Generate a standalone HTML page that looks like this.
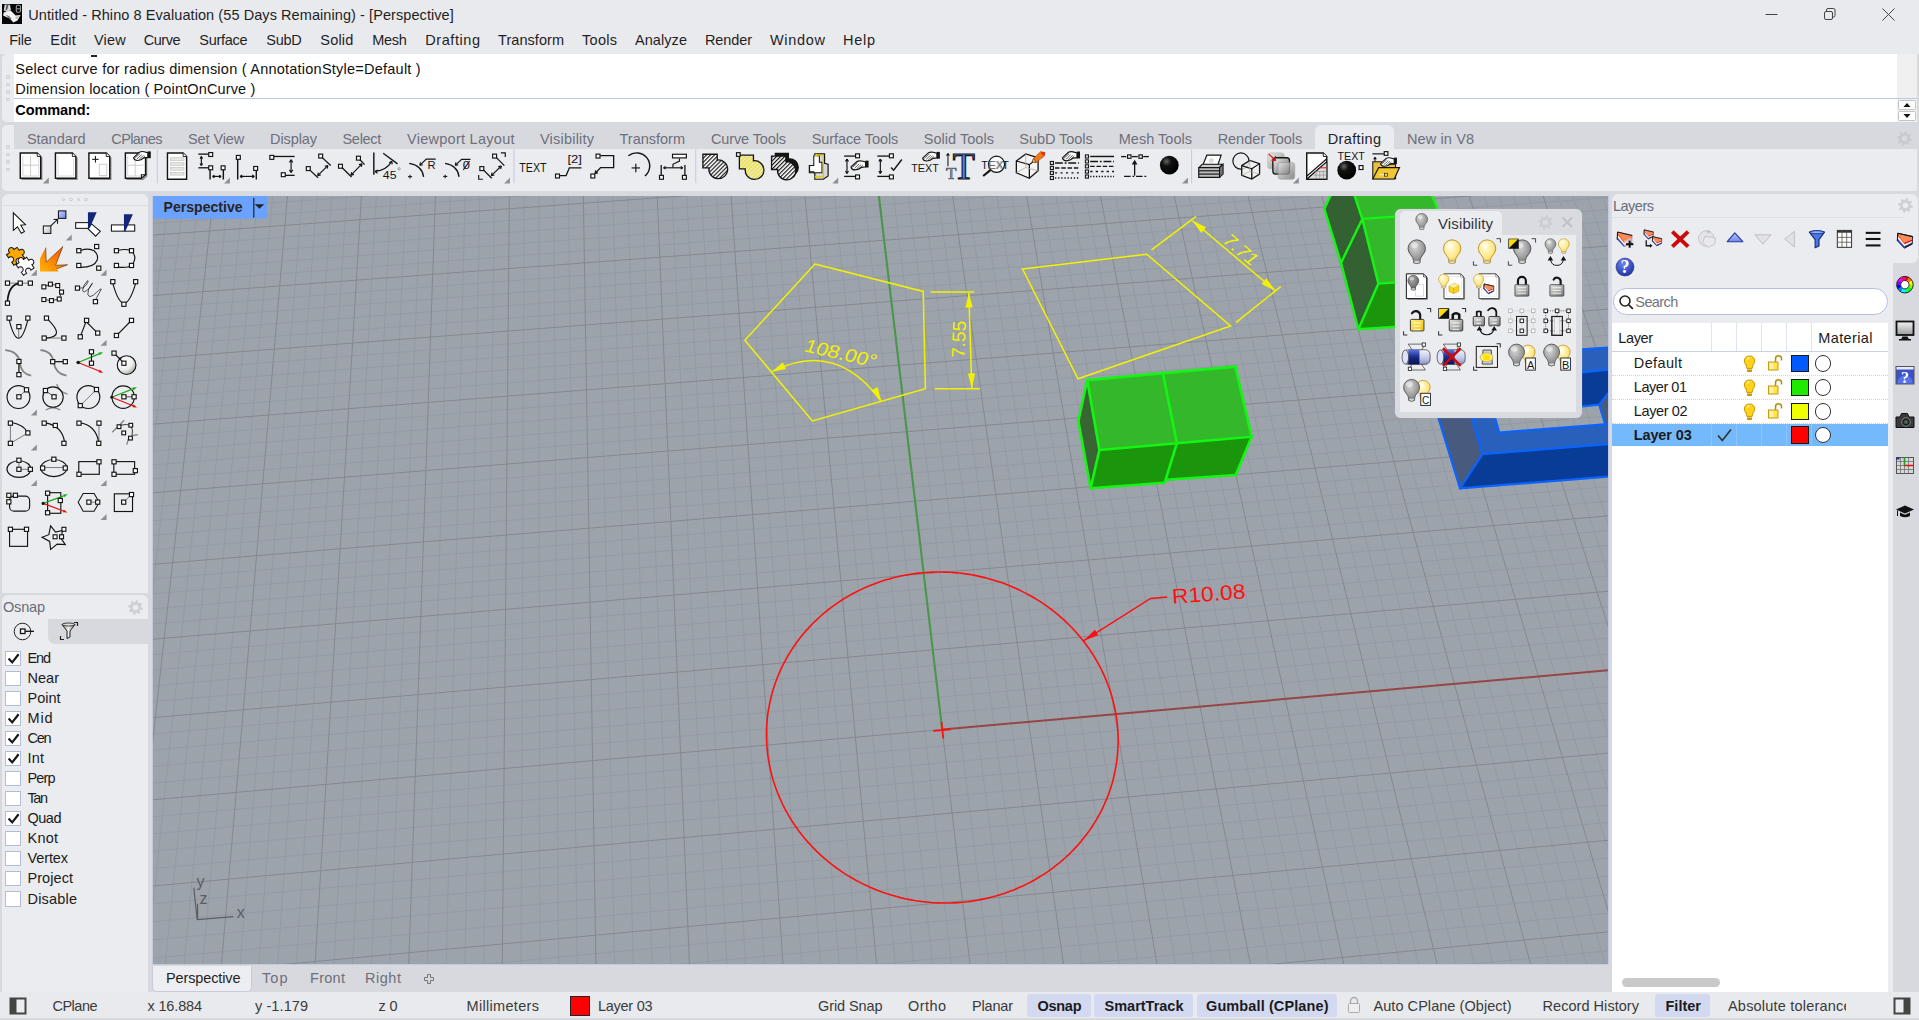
<!DOCTYPE html><html><head><meta charset="utf-8"><title>Untitled - Rhino 8 Evaluation</title><style>
*{box-sizing:border-box;margin:0;padding:0}
html,body{width:1919px;height:1020px;overflow:hidden;background:#d8d9de;font-family:"Liberation Sans",sans-serif;}
.t{position:absolute;white-space:nowrap;line-height:20px;font-size:14.5px;color:#1b1b1b}
.a{position:absolute}
svg{position:absolute;overflow:visible}
</style></head><body>
<div class="a" style="left:0px;top:0px;width:1919px;height:54px;background:#e9eaee;"></div>
<svg style="left:2px;top:4px" width="20" height="20" viewBox="0 0 20 20"><rect width="20" height="20" fill="#060606"/><path d="M2.700 0.400L8 0.700L8.900 6L4.900 7.900L1.750 6.600Z" fill="#d8d8d8"/><path d="M4.500 1L6.500 1L5 6L3.500 6.500Z" fill="#555"/><path d="M1.750 8.500L8.600 6.600L13.600 11.600L18.600 11L15.500 16.600L11.400 18.500L8 14.750L1.100 11.600Z" fill="#f2f2f2"/><path d="M3.500 10.500L7.500 12.500L9.500 15L8 15.500Z" fill="#666"/><path d="M13 13L17.500 11.800L15 15.500Z" fill="#bbb"/><rect x="14.300" y="1.300" width="4.200" height="7" rx="1.500" fill="none" stroke="#9a9a9a" stroke-width="1.100"/><path d="M14.500 4.800h4" stroke="#9a9a9a" stroke-width="1"/></svg>
<span class="t" style="left:28.30px;top:4.98px;font-size:14.50px;letter-spacing:0.075px;color:#1f1f1f;">Untitled - Rhino 8 Evaluation (55 Days Remaining) - [Perspective]</span>
<span class="t" style="left:9.30px;top:29.98px;font-size:14.50px;letter-spacing:-0.288px;color:#1f1f1f;">File</span>
<span class="t" style="left:50.30px;top:29.98px;font-size:14.50px;letter-spacing:0.171px;color:#1f1f1f;">Edit</span>
<span class="t" style="left:94.00px;top:29.98px;font-size:14.50px;letter-spacing:0.211px;color:#1f1f1f;">View</span>
<span class="t" style="left:143.80px;top:29.98px;font-size:14.50px;letter-spacing:-0.495px;color:#1f1f1f;">Curve</span>
<span class="t" style="left:199.30px;top:29.98px;font-size:14.50px;letter-spacing:-0.295px;color:#1f1f1f;">Surface</span>
<span class="t" style="left:266.30px;top:29.98px;font-size:14.50px;letter-spacing:-0.258px;color:#1f1f1f;">SubD</span>
<span class="t" style="left:320.30px;top:29.98px;font-size:14.50px;letter-spacing:0.189px;color:#1f1f1f;">Solid</span>
<span class="t" style="left:372.30px;top:29.98px;font-size:14.50px;letter-spacing:-0.319px;color:#1f1f1f;">Mesh</span>
<span class="t" style="left:425.30px;top:29.98px;font-size:14.50px;letter-spacing:0.561px;color:#1f1f1f;">Drafting</span>
<span class="t" style="left:498.00px;top:29.98px;font-size:14.50px;letter-spacing:0.059px;color:#1f1f1f;">Transform</span>
<span class="t" style="left:582.00px;top:29.98px;font-size:14.50px;letter-spacing:0.287px;color:#1f1f1f;">Tools</span>
<span class="t" style="left:635.00px;top:29.98px;font-size:14.50px;letter-spacing:0.069px;color:#1f1f1f;">Analyze</span>
<span class="t" style="left:705.00px;top:29.98px;font-size:14.50px;letter-spacing:-0.112px;color:#1f1f1f;">Render</span>
<span class="t" style="left:770.00px;top:29.98px;font-size:14.50px;letter-spacing:0.686px;color:#1f1f1f;">Window</span>
<span class="t" style="left:843.00px;top:29.98px;font-size:14.50px;letter-spacing:0.726px;color:#1f1f1f;">Help</span>
<svg style="left:1750px;top:0" width="169" height="30"><path d="M15.5 14.5h12" stroke="#444" fill="none"/><rect x="74.5" y="11.5" width="8" height="8" rx="1.5" fill="none" stroke="#444"/><path d="M76.5 11.5v-1.5a1.5 1.5 0 0 1 1.5-1.5h5.5a1.5 1.5 0 0 1 1.5 1.5v5.5a1.5 1.5 0 0 1-1.5 1.5h-1" fill="none" stroke="#444"/><path d="M132.5 8.5l12 12m0-12l-12 12" stroke="#444" fill="none"/></svg>
<div class="a" style="left:2px;top:54px;width:1915px;height:68px;background:#ebecf0;border-radius:5px 0 0 5px;"></div>
<div class="a" style="left:14px;top:54px;width:1883px;height:68px;background:#fff;"></div>
<div class="a" style="left:1897px;top:54px;width:20px;height:68px;background:#f0f0f0;"></div>
<div class="a" style="left:14px;top:98px;width:1903px;height:1px;background:#bfc8e0;"></div>
<div class="a" style="left:91px;top:55px;width:6px;height:1.5px;background:#222;"></div>
<span class="t" style="left:15.30px;top:58.68px;font-size:14.50px;letter-spacing:0.235px;color:#111;">Select curve for radius dimension ( AnnotationStyle=Default )</span>
<span class="t" style="left:15.30px;top:78.68px;font-size:14.50px;letter-spacing:0.137px;color:#111;">Dimension location ( PointOnCurve )</span>
<span class="t" style="left:15.30px;top:99.58px;font-size:14.50px;letter-spacing:-0.103px;font-weight:bold;color:#000;">Command:</span>
<div class="a" style="left:6px;top:75.3px;width:3.5px;height:3.5px;border:1px solid #c3c4ca;border-radius:50%"></div>
<div class="a" style="left:6px;top:82.8px;width:3.5px;height:3.5px;border:1px solid #c3c4ca;border-radius:50%"></div>
<div class="a" style="left:6px;top:90.3px;width:3.5px;height:3.5px;border:1px solid #c3c4ca;border-radius:50%"></div>
<div class="a" style="left:6px;top:97.8px;width:3.5px;height:3.5px;border:1px solid #c3c4ca;border-radius:50%"></div>
<svg style="left:1898px;top:99px" width="19" height="23"><rect x="0.5" y="1.5" width="17" height="9" rx="1" fill="#fdfdfd" stroke="#c4c4c4"/><rect x="0.5" y="12.5" width="17" height="9" rx="1" fill="#fdfdfd" stroke="#c4c4c4"/><path d="M5.500 8l3.500-4 3.500 4z M5.500 15l3.500 4 3.500-4z" fill="#111"/></svg>
<div class="a" style="left:2px;top:125px;width:1915px;height:66px;background:#ebecf0;border-radius:5px 0 0 5px;"></div>
<div class="a" style="left:14px;top:125px;width:1903px;height:24px;background:#d8d9de;"></div>
<div class="a" style="left:1314.5px;top:125px;width:79px;height:24px;background:#ebecf0;border-radius:6px 6px 0 0;"></div>
<span class="t" style="left:27.00px;top:128.98px;font-size:14.50px;letter-spacing:-0.050px;color:#6d6f7a;">Standard</span>
<span class="t" style="left:111.30px;top:128.98px;font-size:14.50px;letter-spacing:-0.601px;color:#6d6f7a;">CPlanes</span>
<span class="t" style="left:188.00px;top:128.98px;font-size:14.50px;letter-spacing:-0.094px;color:#6d6f7a;">Set View</span>
<span class="t" style="left:270.00px;top:128.98px;font-size:14.50px;letter-spacing:-0.091px;color:#6d6f7a;">Display</span>
<span class="t" style="left:342.50px;top:128.98px;font-size:14.50px;letter-spacing:-0.300px;color:#6d6f7a;">Select</span>
<span class="t" style="left:407.00px;top:128.98px;font-size:14.50px;letter-spacing:0.270px;color:#6d6f7a;">Viewport Layout</span>
<span class="t" style="left:540.00px;top:128.98px;font-size:14.50px;letter-spacing:0.210px;color:#6d6f7a;">Visibility</span>
<span class="t" style="left:619.50px;top:128.98px;font-size:14.50px;letter-spacing:-0.004px;color:#6d6f7a;">Transform</span>
<span class="t" style="left:711.00px;top:128.98px;font-size:14.50px;letter-spacing:-0.130px;color:#6d6f7a;">Curve Tools</span>
<span class="t" style="left:811.70px;top:128.98px;font-size:14.50px;letter-spacing:-0.083px;color:#6d6f7a;">Surface Tools</span>
<span class="t" style="left:923.70px;top:128.98px;font-size:14.50px;letter-spacing:0.044px;color:#6d6f7a;">Solid Tools</span>
<span class="t" style="left:1019.30px;top:128.98px;font-size:14.50px;letter-spacing:-0.054px;color:#6d6f7a;">SubD Tools</span>
<span class="t" style="left:1118.70px;top:128.98px;font-size:14.50px;letter-spacing:0.025px;color:#6d6f7a;">Mesh Tools</span>
<span class="t" style="left:1217.70px;top:128.98px;font-size:14.50px;letter-spacing:-0.052px;color:#6d6f7a;">Render Tools</span>
<span class="t" style="left:1407.00px;top:128.98px;font-size:14.50px;letter-spacing:0.114px;color:#6d6f7a;">New in V8</span>
<span class="t" style="left:1327.70px;top:128.98px;font-size:14.50px;letter-spacing:0.361px;color:#1f1f1f;">Drafting</span>
<div class="a" style="left:6px;top:145px;width:3.5px;height:3.5px;border:1px solid #c3c4ca;border-radius:50%"></div>
<div class="a" style="left:6px;top:152.5px;width:3.5px;height:3.5px;border:1px solid #c3c4ca;border-radius:50%"></div>
<div class="a" style="left:6px;top:160.1px;width:3.5px;height:3.5px;border:1px solid #c3c4ca;border-radius:50%"></div>
<div class="a" style="left:6px;top:167.6px;width:3.5px;height:3.5px;border:1px solid #c3c4ca;border-radius:50%"></div>
<svg style="left:14px;top:148px" width="250" height="44" viewBox="0 0 1919 337.700"><path d="M213 71 V240 H58" fill="none" stroke="#8a8a8a" stroke-width="10"/><path d="M48 38 H178 L205 65 V232 H48 Z" fill="#fff" stroke="#141414" stroke-width="11" stroke-linejoin="miter"/><path d="M178 38 V65 H205" fill="#fff" stroke="#141414" stroke-width="7"/><path d="M127 62 L127 215" fill="none" stroke="#cfcfcf" stroke-width="8" /><path d="M68 132 L190 132" fill="none" stroke="#cfcfcf" stroke-width="8" /><path d="M68 62V215H190V75" fill="none" stroke="#cfcfcf" stroke-width="6" /><path d="M267 227 v45 h-45 z" fill="#8f9095"/><path d="M483 71 V240 H328" fill="none" stroke="#8a8a8a" stroke-width="10"/><path d="M318 38 H448 L475 65 V232 H318 Z" fill="#fff" stroke="#141414" stroke-width="11" stroke-linejoin="miter"/><path d="M448 38 V65 H475" fill="#fff" stroke="#141414" stroke-width="7"/><path d="M338 58V215H457V75" fill="none" stroke="#d4d4d4" stroke-width="6" /><path d="M743 71 V240 H585" fill="none" stroke="#8a8a8a" stroke-width="10"/><path d="M575 38 H708 L735 65 V232 H575 Z" fill="#fff" stroke="#141414" stroke-width="11" stroke-linejoin="miter"/><path d="M708 38 V65 H735" fill="#fff" stroke="#141414" stroke-width="7"/><path d="M600 87 L650 87" fill="none" stroke="#141414" stroke-width="8" /><path d="M625 62 L625 112" fill="none" stroke="#141414" stroke-width="8" /><path d="M655 125H712V212H655Z" fill="#fff" stroke="#cfcfcf" stroke-width="8" /><path d="M1018 60V216L990 240H863" fill="none" stroke="#8a8a8a" stroke-width="10"/><path d="M855 38H1010V205L978 232H855Z" fill="#fff" stroke="#141414" stroke-width="11"/><path d="M930 62 L930 215" fill="none" stroke="#cfcfcf" stroke-width="8" /><path d="M872 132 L995 132" fill="none" stroke="#cfcfcf" stroke-width="8" /><path d="M873 62V215H975" fill="none" stroke="#cfcfcf" stroke-width="6" /><path d="M978 232V205H1010Z" fill="#fff" stroke="#141414" stroke-width="8"/><g transform="translate(918,24) scale(1)"><path d="M0 50 L45 8 Q60 0 80 5 L110 12 V48 L80 52 Q60 70 30 72 Q5 72 0 50Z" fill="#fff" stroke="#141414" stroke-width="9"/><rect x="108" y="2" width="24" height="52" fill="#141414"/><path d="M12 52L50 18M26 60L62 26M42 64L76 32M58 64L88 36" stroke="#141414" stroke-width="5"/></g><path d="M1100 10 L1100 270" fill="none" stroke="#c3cbe3" stroke-width="8" /><path d="M1178 38 H1298 L1325 65 V240 H1178 Z" fill="#fff" stroke="#141414" stroke-width="11" stroke-linejoin="miter"/><path d="M1298 38 V65 H1325" fill="#fff" stroke="#141414" stroke-width="7"/><rect x="1200" y="75" width="105" height="20" fill="#e6e6e6" stroke="#bdbdbd" stroke-width="5"/><rect x="1200" y="113" width="105" height="20" fill="#e6e6e6" stroke="#bdbdbd" stroke-width="5"/><rect x="1200" y="150" width="105" height="20" fill="#e6e6e6" stroke="#bdbdbd" stroke-width="5"/><rect x="1200" y="188" width="105" height="20" fill="#e6e6e6" stroke="#bdbdbd" stroke-width="5"/><path d="M1415 47 L1497 47" fill="none" stroke="#141414" stroke-width="10" /><rect x="1495" y="35" width="30" height="30" fill="#fff" stroke="#141414" stroke-width="9"/><path d="M1415 152 L1497 152" fill="none" stroke="#141414" stroke-width="10" /><rect x="1495" y="137" width="30" height="30" fill="#fff" stroke="#141414" stroke-width="9"/><path d="M1438 66 L1438 134" fill="none" stroke="#141414" stroke-width="9" /><path d="M1428.46 118.735 L1438 134 M1447.54 118.735 L1438 134" fill="none" stroke="#141414" stroke-width="9"/><path d="M1447.54 81.2649 L1438 66 M1428.46 81.2649 L1438 66" fill="none" stroke="#141414" stroke-width="9"/><path d="M1505 167 L1505 242" fill="none" stroke="#141414" stroke-width="11" /><rect x="1590" y="137" width="30" height="30" fill="#fff" stroke="#141414" stroke-width="9"/><path d="M1607 167 L1607 242" fill="none" stroke="#141414" stroke-width="11" /><path d="M1524 218 L1590 218" fill="none" stroke="#141414" stroke-width="9" /><path d="M1574.74 227.539 L1590 218 M1574.74 208.461 L1590 218" fill="none" stroke="#141414" stroke-width="9"/><path d="M1539.26 208.461 L1524 218 M1539.26 227.539 L1524 218" fill="none" stroke="#141414" stroke-width="9"/><path d="M1657 227 v45 h-45 z" fill="#8f9095"/><rect x="1707" y="57" width="30" height="30" fill="#fff" stroke="#141414" stroke-width="9"/><path d="M1717 87 L1717 242" fill="none" stroke="#141414" stroke-width="11" /><rect x="1840" y="142" width="30" height="30" fill="#fff" stroke="#141414" stroke-width="9"/><path d="M1860 172 L1860 242" fill="none" stroke="#141414" stroke-width="11" /><path d="M1735 218 L1845 218" fill="none" stroke="#141414" stroke-width="9" /><path d="M1828.04 228.598 L1845 218 M1828.04 207.402 L1845 218" fill="none" stroke="#141414" stroke-width="9"/><path d="M1751.96 207.402 L1735 218 M1751.96 228.598 L1735 218" fill="none" stroke="#141414" stroke-width="9"/></svg>
<svg style="left:264px;top:148px" width="250" height="44" viewBox="0 0 1919 337.700"><rect x="45" y="57" width="30" height="30" fill="#fff" stroke="#141414" stroke-width="9"/><path d="M75 65 L235 65" fill="none" stroke="#141414" stroke-width="10" /><rect x="133" y="190" width="30" height="30" fill="#fff" stroke="#141414" stroke-width="9"/><path d="M163 210 L235 210" fill="none" stroke="#141414" stroke-width="10" /><path d="M208 90 L208 188" fill="none" stroke="#141414" stroke-width="9" /><path d="M195.282 167.647 L208 188 M220.718 167.647 L208 188" fill="none" stroke="#141414" stroke-width="9"/><path d="M220.718 110.353 L208 90 M195.282 110.353 L208 90" fill="none" stroke="#141414" stroke-width="9"/><rect x="420" y="47" width="30" height="30" fill="#fff" stroke="#141414" stroke-width="9"/><path d="M445 72 L512 135" fill="none" stroke="#141414" stroke-width="10" /><rect x="325" y="143" width="30" height="30" fill="#fff" stroke="#141414" stroke-width="9"/><path d="M350 168 L415 228" fill="none" stroke="#141414" stroke-width="10" /><path d="M412 212 L490 135" fill="none" stroke="#141414" stroke-width="9" /><path d="M484.45 158.35 L490 135 M466.581 140.248 L490 135" fill="none" stroke="#141414" stroke-width="9"/><path d="M417.55 188.65 L412 212 M435.419 206.752 L412 212" fill="none" stroke="#141414" stroke-width="9"/><rect x="710" y="63" width="30" height="30" fill="#fff" stroke="#141414" stroke-width="9"/><path d="M737 90 L772 128" fill="none" stroke="#141414" stroke-width="10" /><rect x="572" y="125" width="30" height="30" fill="#fff" stroke="#141414" stroke-width="9"/><path d="M598 150 L672 222" fill="none" stroke="#141414" stroke-width="10" /><path d="M668 208 L752 122" fill="none" stroke="#141414" stroke-width="9" /><path d="M746.877 145.447 L752 122 M728.68 127.674 L752 122" fill="none" stroke="#141414" stroke-width="9"/><path d="M673.123 184.553 L668 208 M691.32 202.326 L668 208" fill="none" stroke="#141414" stroke-width="9"/><path d="M843 35 L843 205" fill="none" stroke="#141414" stroke-width="11" /><path d="M915 40 L1025 122" fill="none" stroke="#141414" stroke-width="10" /><path d="M855 180 Q940 170 980 105" fill="none" stroke="#141414" stroke-width="9" /><path d="M873.384 169.104 L852 180 M871.167 194.444 L852 180" fill="none" stroke="#141414" stroke-width="9"/><path d="M983.674 125.942 L982 102 M961.215 114 L982 102" fill="none" stroke="#141414" stroke-width="9"/><text x="912" y="240" font-family="Liberation Sans,sans-serif" font-size="78" fill="#141414" textLength="105" lengthAdjust="spacingAndGlyphs" >45</text><circle cx="1037" cy="160" r="9" fill="none" stroke="#888" stroke-width="6"/><path d="M1115 118 Q1215 135 1225 222" fill="none" stroke="#141414" stroke-width="10" /><path d="M1200 130 L1245 85 L1318 85" fill="none" stroke="#141414" stroke-width="9" /><path d="M1201.4 110.615 L1196 134 M1219.38 128.601 L1196 134" fill="none" stroke="#141414" stroke-width="9"/><text x="1255" y="165" font-family="Liberation Sans,sans-serif" font-size="80" fill="#141414" textLength="62" lengthAdjust="spacingAndGlyphs" >R</text><path d="M1105 220 L1137 220" fill="none" stroke="#141414" stroke-width="8" /><path d="M1121 206 L1121 234" fill="none" stroke="#141414" stroke-width="8" /><path d="M1390 118 Q1488 135 1497 222" fill="none" stroke="#141414" stroke-width="10" /><path d="M1472 130 L1517 87 L1585 87" fill="none" stroke="#141414" stroke-width="9" /><path d="M1473.4 110.615 L1468 134 M1491.38 128.601 L1468 134" fill="none" stroke="#141414" stroke-width="9"/><text x="1525" y="165" font-family="Liberation Sans,sans-serif" font-size="80" fill="#141414" textLength="55" lengthAdjust="spacingAndGlyphs" >0</text><path d="M1530 168 L1578 100" fill="none" stroke="#141414" stroke-width="8" /><path d="M1375 218 L1407 218" fill="none" stroke="#141414" stroke-width="8" /><path d="M1391 206 L1391 232" fill="none" stroke="#141414" stroke-width="8" /><rect x="1755" y="47" width="30" height="30" fill="#fff" stroke="#141414" stroke-width="9"/><path d="M1782 72 L1845 135" fill="none" stroke="#141414" stroke-width="10" /><rect x="1657" y="143" width="30" height="30" fill="#fff" stroke="#141414" stroke-width="9"/><path d="M1684 168 L1748 232" fill="none" stroke="#141414" stroke-width="10" /><path d="M1745 212 L1822 138" fill="none" stroke="#141414" stroke-width="9" /><path d="M1816.14 161.273 L1822 138 M1798.51 142.933 L1822 138" fill="none" stroke="#141414" stroke-width="9"/><path d="M1750.86 188.727 L1745 212 M1768.49 207.067 L1745 212" fill="none" stroke="#141414" stroke-width="9"/><path d="M1818 38 L1852 38 L1852 70" fill="none" stroke="#141414" stroke-width="9" /><path d="M1648 208 L1648 240 L1680 240" fill="none" stroke="#141414" stroke-width="9" /><path d="M1888 227 v45 h-45 z" fill="#8f9095"/></svg>
<svg style="left:514px;top:148px" width="250" height="44" viewBox="0 0 1919 337.700"><path d="M0 10 L0 270" fill="none" stroke="#c3cbe3" stroke-width="8" /><text x="40" y="185" font-family="Liberation Sans,sans-serif" font-size="92" fill="#141414" textLength="210" lengthAdjust="spacingAndGlyphs" >TEXT</text><rect x="319" y="200" width="30" height="30" fill="#fff" stroke="#141414" stroke-width="9"/><path d="M350 212 L400 212 L425 152 L518 152" fill="none" stroke="#141414" stroke-width="10" /><text x="410" y="118" font-family="Liberation Sans,sans-serif" font-size="88" fill="#141414" textLength="112" lengthAdjust="spacingAndGlyphs" >[2]</text><rect x="630" y="47" width="30" height="30" fill="#fff" stroke="#141414" stroke-width="9"/><path d="M662 58 L765 58 L765 150 L665 150 L620 198" fill="none" stroke="#141414" stroke-width="10" /><rect x="590" y="200" width="30" height="30" fill="#fff" stroke="#141414" stroke-width="9"/><path d="M627.399 172.615 L622 196 M645.385 190.601 L622 196" fill="none" stroke="#141414" stroke-width="9"/><path d="M878 60 A95 95 0 0 1 1005 215" fill="none" stroke="#141414" stroke-width="11" /><path d="M903 153 L967 153" fill="none" stroke="#141414" stroke-width="9" /><path d="M935 120 L935 186" fill="none" stroke="#141414" stroke-width="9" /><rect x="1217" y="48" width="106" height="28" fill="#fff" stroke="#141414" stroke-width="9"/><path d="M1270 80 L1270 100 L1220 125 L1220 150" fill="none" stroke="#141414" stroke-width="9" /><path d="M1130 130 L1130 208" fill="none" stroke="#141414" stroke-width="10" /><path d="M1312 130 L1312 208" fill="none" stroke="#141414" stroke-width="10" /><rect x="1117" y="210" width="30" height="30" fill="#fff" stroke="#141414" stroke-width="9"/><rect x="1293" y="210" width="30" height="30" fill="#fff" stroke="#141414" stroke-width="9"/><path d="M1148 152 L1295 152" fill="none" stroke="#141414" stroke-width="9" /><path d="M1279.74 161.539 L1295 152 M1279.74 142.461 L1295 152" fill="none" stroke="#141414" stroke-width="9"/><path d="M1163.26 142.461 L1148 152 M1163.26 161.539 L1148 152" fill="none" stroke="#141414" stroke-width="9"/><path d="M1395 10 L1395 270" fill="none" stroke="#c3cbe3" stroke-width="8" /><defs><pattern id="hk" width="22" height="22" patternUnits="userSpaceOnUse" patternTransform="rotate(-45)"><rect width="22" height="22" fill="#fff"/><rect width="22" height="9" fill="#141414"/></pattern><pattern id="hy" width="22" height="22" patternUnits="userSpaceOnUse" patternTransform="rotate(-45)"><rect width="22" height="22" fill="#e6e6e6"/><rect width="22" height="9" fill="#f5e600"/></pattern></defs><path d="M1450 48H1560V92A72 72 0 1 1 1497 152H1450Z" fill="url(#hk)" stroke="#141414" stroke-width="10"/><path d="M1730 55H1838V98A72 72 0 1 1 1775 160H1730Z" fill="url(#hy)" stroke="#141414" stroke-width="10"/><rect x="1708" y="36" width="28" height="28" fill="#fff" stroke="#141414" stroke-width="9"/></svg>
<svg style="left:764px;top:148px" width="250" height="44" viewBox="0 0 1919 337.700"><path transform="translate(24,-26)" d="M58 62H168V105A70 70 0 1 1 105 165H58Z" fill="#141414"/><path d="M58 62H168V105A70 70 0 1 1 105 165H58Z" fill="url(#hk)" stroke="#141414" stroke-width="10"/><path d="M390 45H465V118L492 125V215L455 240H390V190H348V135H390Z" fill="#d8d8d8" stroke="#141414" stroke-width="9"/><path d="M382 60H425V110H445V190H382V182H350V135H382Z" fill="#fff" stroke="#141414" stroke-width="8"/><path d="M400 55 L455 55 L455 222 L400 222" fill="none" stroke="#d8c800" stroke-width="9" /><path d="M385 55l22-12v24zM385 222l22-12v24z" fill="#e6d200"/><path d="M570 227 v45 h-45 z" fill="#8f9095"/><path d="M615 62 L700 62" fill="none" stroke="#141414" stroke-width="10" /><rect x="703" y="45" width="30" height="30" fill="#fff" stroke="#141414" stroke-width="9"/><path d="M615 218 L700 218" fill="none" stroke="#141414" stroke-width="10" /><rect x="703" y="207" width="30" height="30" fill="#fff" stroke="#141414" stroke-width="9"/><path d="M637 85 L637 195" fill="none" stroke="#141414" stroke-width="9" /><path d="M625.342 176.343 L637 195 M648.658 176.343 L637 195" fill="none" stroke="#141414" stroke-width="9"/><path d="M648.658 103.657 L637 85 M625.342 103.657 L637 85" fill="none" stroke="#141414" stroke-width="9"/><g transform="translate(668,95) scale(1.02)"><path d="M0 50 L45 8 Q60 0 80 5 L110 12 V48 L80 52 Q60 70 30 72 Q5 72 0 50Z" fill="#fff" stroke="#141414" stroke-width="9"/><rect x="108" y="2" width="24" height="52" fill="#141414"/><path d="M12 52L50 18M26 60L62 26M42 64L76 32M58 64L88 36" stroke="#141414" stroke-width="5"/></g><path d="M870 62 L960 62" fill="none" stroke="#141414" stroke-width="10" /><rect x="963" y="45" width="30" height="30" fill="#fff" stroke="#141414" stroke-width="9"/><path d="M870 218 L960 218" fill="none" stroke="#141414" stroke-width="10" /><rect x="963" y="207" width="30" height="30" fill="#fff" stroke="#141414" stroke-width="9"/><path d="M893 85 L893 195" fill="none" stroke="#141414" stroke-width="9" /><path d="M881.342 176.343 L893 195 M904.658 176.343 L893 195" fill="none" stroke="#141414" stroke-width="9"/><path d="M904.658 103.657 L893 85 M881.342 103.657 L893 85" fill="none" stroke="#141414" stroke-width="9"/><path d="M975 150 L995 170 L1058 88" fill="none" stroke="#141414" stroke-width="11" /><text x="1130" y="185" font-family="Liberation Sans,sans-serif" font-size="88" fill="#141414" textLength="212" lengthAdjust="spacingAndGlyphs" >TEXT</text><g transform="translate(1218,28) scale(1)"><path d="M0 50 L45 8 Q60 0 80 5 L110 12 V48 L80 52 Q60 70 30 72 Q5 72 0 50Z" fill="#fff" stroke="#141414" stroke-width="9"/><rect x="108" y="2" width="24" height="52" fill="#141414"/><path d="M12 52L50 18M26 60L62 26M42 64L76 32M58 64L88 36" stroke="#141414" stroke-width="5"/></g><text x="1448" y="240" font-family="Liberation Serif,serif" font-size="285" fill="#5a7be0" stroke="#141414" stroke-width="9" textLength="170" lengthAdjust="spacingAndGlyphs">T</text><text x="1398" y="240" font-family="Liberation Serif,serif" font-size="125" fill="#9a9a9a" stroke="#555" stroke-width="5" textLength="80" lengthAdjust="spacingAndGlyphs">T</text><path d="M1412 50 L1412 140" fill="none" stroke="#141414" stroke-width="8" /><path d="M1422.6 58.961 L1412 42 M1401.4 58.961 L1412 42" fill="none" stroke="#141414" stroke-width="9"/><text x="1668" y="160" font-family="Liberation Sans,sans-serif" font-size="88" fill="#141414" textLength="212" lengthAdjust="spacingAndGlyphs" >TEXT</text><circle cx="1785" cy="125" r="62" fill="#ffffffb0" stroke="#141414" stroke-width="9"/><path d="M1738 170 L1682 215" fill="none" stroke="#141414" stroke-width="16" /><text x="1722" y="158" font-family="Liberation Sans,sans-serif" font-size="84" fill="#666" textLength="118" lengthAdjust="spacingAndGlyphs" >EX</text></svg>
<svg style="left:1014px;top:148px" width="250" height="44" viewBox="0 0 1919 337.700"><path d="M18 100L90 45L185 75V175L118 232L18 190Z" fill="#f4f4f4" stroke="#141414" stroke-width="10" /><path d="M18 100 L118 128 L185 75" fill="none" stroke="#141414" stroke-width="9" /><path d="M118 128 L118 232" fill="none" stroke="#141414" stroke-width="10" /><path d="M90 45 L90 150 L18 190" fill="none" stroke="#aaa" stroke-width="6" /><path d="M90 150 L185 175" fill="none" stroke="#aaa" stroke-width="6" /><path d="M140 105L150 80L205 28L238 35L232 62L170 112Z" fill="#f07818" stroke="#b04000" stroke-width="5"/><path d="M140 105L150 80L170 112Z" fill="#f5d080" stroke="#222" stroke-width="4"/><path d="M205 28L238 35L232 62L215 50Z" fill="#e03010"/><rect x="279" y="103" width="24" height="24" fill="#ddd" stroke="#141414" stroke-width="8"/><path d="M315 115 H498" stroke="#141414" stroke-width="11" stroke-dasharray="60 14 14 14"/><rect x="279" y="141" width="24" height="24" fill="#ddd" stroke="#141414" stroke-width="8"/><path d="M315 153 H498" stroke="#141414" stroke-width="11" stroke-dasharray="34 14"/><rect x="279" y="179" width="24" height="24" fill="#ddd" stroke="#141414" stroke-width="8"/><path d="M315 191 H498" stroke="#141414" stroke-width="11" stroke-dasharray="16 26"/><rect x="279" y="218" width="24" height="24" fill="#ddd" stroke="#141414" stroke-width="8"/><path d="M315 230 H498" stroke="#141414" stroke-width="11" stroke-dasharray="10 14"/><g transform="translate(372,25) scale(1.02)"><path d="M0 50 L45 8 Q60 0 80 5 L110 12 V48 L80 52 Q60 70 30 72 Q5 72 0 50Z" fill="#fff" stroke="#141414" stroke-width="9"/><rect x="108" y="2" width="24" height="52" fill="#141414"/><path d="M12 52L50 18M26 60L62 26M42 64L76 32M58 64L88 36" stroke="#141414" stroke-width="5"/></g><rect x="548" y="53" width="24" height="24" fill="#ddd" stroke="#141414" stroke-width="8"/><path d="M585 65 H768" stroke="#141414" stroke-width="11" stroke-dasharray="none"/><rect x="548" y="91" width="24" height="24" fill="#ddd" stroke="#141414" stroke-width="8"/><path d="M585 103 H768" stroke="#141414" stroke-width="11" stroke-dasharray="60 14 14 14"/><rect x="548" y="129" width="24" height="24" fill="#ddd" stroke="#141414" stroke-width="8"/><path d="M585 141 H768" stroke="#141414" stroke-width="11" stroke-dasharray="34 14"/><rect x="548" y="169" width="24" height="24" fill="#ddd" stroke="#141414" stroke-width="8"/><path d="M585 181 H768" stroke="#141414" stroke-width="11" stroke-dasharray="18 24"/><rect x="548" y="207" width="24" height="24" fill="#ddd" stroke="#141414" stroke-width="8"/><path d="M585 219 H768" stroke="#141414" stroke-width="11" stroke-dasharray="10 12"/><path d="M822 66 L862 66" fill="none" stroke="#141414" stroke-width="10" /><rect x="872" y="53" width="26" height="26" fill="#fff" stroke="#141414" stroke-width="9"/><path d="M905 66 L950 66" fill="none" stroke="#141414" stroke-width="10" /><rect x="959" y="53" width="26" height="26" fill="#fff" stroke="#141414" stroke-width="9"/><path d="M992 66 L1035 66" fill="none" stroke="#141414" stroke-width="10" /><path d="M926 212 L926 105" fill="none" stroke="#141414" stroke-width="10" /><path d="M926 90l-22 36h44z" fill="#141414"/><path d="M845 218H1015" stroke="#141414" stroke-width="11" stroke-dasharray="50 14 14 14"/><defs><radialGradient id="sph" cx="0.35" cy="0.3" r="0.7"><stop offset="0" stop-color="#666"/><stop offset="0.35" stop-color="#111"/><stop offset="1" stop-color="#000"/></radialGradient></defs><circle cx="1192" cy="132" r="72" fill="url(#sph)"/><path d="M1335 227 v45 h-45 z" fill="#8f9095"/><path d="M1363 10 L1363 270" fill="none" stroke="#c3cbe3" stroke-width="8" /><path d="M1450 130L1480 55H1590L1565 130Z" fill="#fff" stroke="#141414" stroke-width="9"/><path d="M1498 88l15-8 17 6v18l-15 8-17-6z" fill="#ddd" stroke="#bbb" stroke-width="3"/><path d="M1420 150L1445 125H1600L1575 150Z" fill="#ccc" stroke="#141414" stroke-width="8"/><path d="M1418 150H1578V225H1418Z" fill="#bdbdbd" stroke="#141414" stroke-width="9"/><path d="M1420 175 L1578 175" fill="none" stroke="#141414" stroke-width="9" /><path d="M1420 200 L1578 200" fill="none" stroke="#141414" stroke-width="9" /><path d="M1578 150L1605 125V200L1578 225Z" fill="#777" stroke="#141414" stroke-width="8"/><circle cx="1742" cy="100" r="62" fill="none" stroke="#141414" stroke-width="9"/><path d="M1748 135L1810 95L1885 120V200L1825 238L1748 210Z" fill="#f0f0f0d0" stroke="#141414" stroke-width="10" /><path d="M1748 135 L1825 160 L1885 120" fill="none" stroke="#141414" stroke-width="9" /><path d="M1825 160 L1825 238" fill="none" stroke="#141414" stroke-width="10" /><path d="M1810 95 L1810 180 L1748 210" fill="none" stroke="#aaa" stroke-width="5" /><path d="M1810 180 L1885 200" fill="none" stroke="#aaa" stroke-width="5" /></svg>
<svg style="left:1264px;top:148px" width="250" height="44" viewBox="0 0 1919 337.700"><defs><linearGradient id="gq" x1="0" y1="0" x2="1" y2="1"><stop offset="0" stop-color="#eee"/><stop offset="1" stop-color="#666"/></linearGradient></defs><rect x="28" y="38" width="128" height="122" rx="22" fill="url(#gq)" stroke="#aaa" stroke-width="6" opacity="0.7"/><rect x="68" y="75" width="128" height="125" rx="22" fill="url(#gq)" stroke="#141414" stroke-width="10"/><rect x="108" y="112" width="128" height="128" rx="22" fill="url(#gq)" stroke="#999" stroke-width="6" opacity="0.75"/><path d="M35 45 L85 92" fill="none" stroke="#f01010" stroke-width="9" /><path d="M58 95 L88 95 L88 62" fill="none" stroke="#f01010" stroke-width="9" /><path d="M267 227 v45 h-45 z" fill="#8f9095"/><path d="M328 38 H455 L482 65 V240 H328 Z" fill="#fff" stroke="#141414" stroke-width="11" stroke-linejoin="miter"/><path d="M455 38 V65 H482" fill="#fff" stroke="#141414" stroke-width="7"/><path d="M330 238L482 105V238Z" fill="#ddd" stroke="#141414" stroke-width="6"/><path d="M330 215 L482 82" fill="none" stroke="#141414" stroke-width="9" /><path d="M330 238 L482 105" fill="none" stroke="#141414" stroke-width="9" /><path d="M400 175 L400 238" fill="none" stroke="#777" stroke-width="4" /><path d="M428 175 L428 238" fill="none" stroke="#777" stroke-width="4" /><path d="M456 175 L456 238" fill="none" stroke="#777" stroke-width="4" /><path d="M380 180 L482 180" fill="none" stroke="#777" stroke-width="4" /><path d="M380 208 L482 208" fill="none" stroke="#777" stroke-width="4" /><path d="M425 152 L478 152" fill="none" stroke="#f01010" stroke-width="8" /><text x="565" y="92" font-family="Liberation Sans,sans-serif" font-size="82" fill="#141414" textLength="208" lengthAdjust="spacingAndGlyphs" >TEXT</text><circle cx="635" cy="170" r="72" fill="url(#sph)"/><rect x="730" y="135" width="30" height="30" fill="#fff" stroke="#141414" stroke-width="9"/><path d="M832 45 L920 45" fill="none" stroke="#141414" stroke-width="9" /><rect x="923" y="28" width="28" height="28" fill="#fff" stroke="#141414" stroke-width="9"/><path d="M852 80 L852 215" fill="none" stroke="#141414" stroke-width="7" /><path d="M861.539 87.2649 L852 72 M842.461 87.2649 L852 72" fill="none" stroke="#141414" stroke-width="9"/><path d="M835 105H900L915 125H1010V235H835Z" fill="#e8c040" stroke="#141414" stroke-width="8"/><g transform="translate(895,72) scale(0.95)"><path d="M0 50 L45 8 Q60 0 80 5 L110 12 V48 L80 52 Q60 70 30 72 Q5 72 0 50Z" fill="#fff" stroke="#141414" stroke-width="9"/><rect x="108" y="2" width="24" height="52" fill="#141414"/><path d="M12 52L50 18M26 60L62 26M42 64L76 32M58 64L88 36" stroke="#141414" stroke-width="5"/></g><path d="M835 238L880 150H1040L1000 238Z" fill="#f2c832" stroke="#141414" stroke-width="9"/><path d="M885 205 L925 205" fill="none" stroke="#fff" stroke-width="6" /><rect x="926" y="194" width="22" height="22" fill="#f8e080" stroke="#141414" stroke-width="5"/></svg><svg style="left:1895.5px;top:130px" width="17" height="17" viewBox="1895.5 130 17 17"><polygon points="1911.46,139.24 1911.18,140.68 1908.76,141.05 1908.17,141.93 1908.76,144.30 1907.54,145.11 1905.57,143.67 1904.53,143.87 1903.26,145.96 1901.82,145.68 1901.45,143.26 1900.57,142.67 1898.20,143.26 1897.39,142.04 1898.83,140.07 1898.63,139.03 1896.54,137.76 1896.82,136.32 1899.24,135.95 1899.83,135.07 1899.24,132.70 1900.46,131.89 1902.43,133.33 1903.47,133.13 1904.74,131.04 1906.18,131.32 1906.55,133.74 1907.43,134.33 1909.80,133.74 1910.61,134.96 1909.17,136.93 1909.37,137.97" fill="#c9cacf"/><circle cx="1904" cy="138.5" r="2.7" fill="#d9dadf"/></svg>
<div class="a" style="left:2px;top:194px;width:146px;height:398.5px;background:#ebecf0;border-radius:6px 6px 0 0;"></div>
<div class="a" style="left:2px;top:205px;width:146px;height:1px;background:#dcdde2;"></div>
<div class="a" style="left:61.8px;top:197.5px;width:3.5px;height:3.5px;border:1px solid #c3c4ca;border-radius:50%"></div>
<div class="a" style="left:69.3px;top:197.5px;width:3.5px;height:3.5px;border:1px solid #c3c4ca;border-radius:50%"></div>
<div class="a" style="left:76.8px;top:197.5px;width:3.5px;height:3.5px;border:1px solid #c3c4ca;border-radius:50%"></div>
<div class="a" style="left:84.3px;top:197.5px;width:3.5px;height:3.5px;border:1px solid #c3c4ca;border-radius:50%"></div>
<svg style="left:0;top:206px" width="150" height="106" viewBox="0 0 1443 1019.72"><defs><linearGradient id="lgw" x1="0" y1="0" x2="1" y2="1"><stop offset="0" stop-color="#fff"/><stop offset="1" stop-color="#bbb"/></linearGradient><linearGradient id="lgb" x1="0" y1="0" x2="1" y2="1"><stop offset="0" stop-color="#c8d2ff"/><stop offset="1" stop-color="#6a82f0"/></linearGradient><linearGradient id="lgo" x1="0" y1="1" x2="1" y2="0"><stop offset="0" stop-color="#ffb400"/><stop offset="1" stop-color="#ff4800"/></linearGradient><radialGradient id="lsph" cx="0.35" cy="0.3" r="0.75"><stop offset="0" stop-color="#fff"/><stop offset="0.6" stop-color="#eee"/><stop offset="1" stop-color="#aaa"/></radialGradient></defs><polygon points="128,65 128,235 168,200 205,262 235,245 200,185 245,180" fill="#fff" stroke="#141414" stroke-width="10" stroke-linejoin="miter"/><rect x="417" y="192" width="72" height="72" fill="url(#lgw)" stroke="#141414" stroke-width="10"/><rect x="562" y="47" width="72" height="72" fill="url(#lgb)" stroke="#141414" stroke-width="10"/><path d="M488 192 L552 132" fill="none" stroke="#141414" stroke-width="10" /><path d="M515 130 L555 128 L553 170" fill="none" stroke="#141414" stroke-width="10" /><path d="M690 275 v58 h-58 z" fill="#8f9095"/><rect x="728" y="160" width="125" height="55" fill="#fff" stroke="#141414" stroke-width="10"/><polygon points="880,172 965,243 920,290 846,218" fill="#fff" stroke="#141414" stroke-width="10"/><polygon points="846,60 930,60 862,215 846,215" fill="#14267a"/><rect x="1072" y="182" width="224" height="60" fill="#fff" stroke="#141414" stroke-width="10"/><polygon points="1192,80 1278,80 1205,245 1192,245" fill="#14267a"/><g transform="translate(140,452) rotate(-35) scale(1.22)"><path d="M-60 -25 h30 a22 22 0 1 1 42 0 h30 v30 a22 22 0 1 1 0 42 v30 h-30 a22 22 0 1 0 -42 0 h-30 v-30 a22 22 0 1 0 0 -42z" fill="#ffa800" stroke="#141414" stroke-width="8"/></g><g transform="translate(232,548) rotate(-35) scale(1.22)"><path d="M-60 -25 h30 a22 22 0 1 1 42 0 h30 v30 a22 22 0 1 1 0 42 v30 h-30 a22 22 0 1 0 -42 0 h-30 v-30 a22 22 0 1 0 0 -42z" fill="#fff" stroke="#141414" stroke-width="8"/></g><path d="M355 612 v58 h-58 z" fill="#8f9095"/><polygon points="385,630 385,505 440,400 445,540 605,390 535,570 650,565 545,605 565,630" fill="url(#lgo)"/><path d="M440 400 L445 540 L605 390 L535 570 L650 565 L545 605" fill="none" stroke="#3a1a00" stroke-width="5" /><path d="M775 428 Q850 400 905 430 Q950 470 935 520 Q910 590 775 590" fill="none" stroke="#141414" stroke-width="11" /><rect x="738" y="410" width="40" height="40" fill="#fff" stroke="#141414" stroke-width="11"/><rect x="910" y="370" width="40" height="40" fill="#fff" stroke="#141414" stroke-width="11"/><rect x="738" y="552" width="40" height="40" fill="#fff" stroke="#141414" stroke-width="11"/><rect x="930" y="578" width="40" height="40" fill="#fff" stroke="#141414" stroke-width="11"/><path d="M1025 612 v58 h-58 z" fill="#8f9095"/><path d="M1135 428 Q1195 410 1252 425 M1275 445 Q1320 500 1275 560 M1135 588 Q1195 595 1250 582" fill="none" stroke="#141414" stroke-width="11" /><rect x="1100" y="410" width="40" height="40" fill="#fff" stroke="#141414" stroke-width="11"/><rect x="1245" y="410" width="40" height="40" fill="#fff" stroke="#141414" stroke-width="11"/><rect x="1100" y="552" width="40" height="40" fill="#fff" stroke="#141414" stroke-width="11"/><rect x="1245" y="552" width="40" height="40" fill="#fff" stroke="#141414" stroke-width="11"/><path d="M85 742 L280 742" fill="none" stroke="#141414" stroke-width="5" /><path d="M72 915 Q85 760 185 742" fill="none" stroke="#141414" stroke-width="17" /><rect x="52" y="722" width="40" height="40" fill="#fff" stroke="#141414" stroke-width="11"/><rect x="175" y="722" width="40" height="40" fill="#fff" stroke="#141414" stroke-width="11"/><rect x="272" y="722" width="40" height="40" fill="#fff" stroke="#141414" stroke-width="11"/><rect x="52" y="915" width="40" height="40" fill="#fff" stroke="#141414" stroke-width="11"/><path d="M422 778 L485 752 L555 765 L592 828 L570 895 L495 910 L422 900" fill="none" stroke="#141414" stroke-width="8" /><rect x="403" y="759" width="38" height="38" fill="#fff" stroke="#141414" stroke-width="11"/><rect x="466" y="733" width="38" height="38" fill="#fff" stroke="#141414" stroke-width="11"/><rect x="536" y="746" width="38" height="38" fill="#fff" stroke="#141414" stroke-width="11"/><rect x="573" y="809" width="38" height="38" fill="#fff" stroke="#141414" stroke-width="11"/><rect x="551" y="876" width="38" height="38" fill="#fff" stroke="#141414" stroke-width="11"/><rect x="476" y="891" width="38" height="38" fill="#fff" stroke="#141414" stroke-width="11"/><rect x="403" y="881" width="38" height="38" fill="#fff" stroke="#141414" stroke-width="11"/><path d="M760 790 Q800 800 830 760 Q860 710 840 720 Q800 760 795 810 Q800 850 860 790 Q900 730 885 745 Q840 800 845 850 Q860 900 930 830 Q970 790 975 800 L920 900" fill="none" stroke="#141414" stroke-width="7" /><rect x="725" y="770" width="40" height="40" fill="#fff" stroke="#141414" stroke-width="11"/><rect x="898" y="900" width="40" height="40" fill="#fff" stroke="#141414" stroke-width="11"/><path d="M1085 745 Q1192 1125 1305 745" fill="none" stroke="#141414" stroke-width="11" /><rect x="1065" y="708" width="40" height="40" fill="#fff" stroke="#141414" stroke-width="11"/><rect x="1285" y="708" width="40" height="40" fill="#fff" stroke="#141414" stroke-width="11"/><rect x="1172" y="925" width="40" height="40" fill="#fff" stroke="#141414" stroke-width="11"/></svg>
<svg style="left:0;top:310px" width="150" height="106" viewBox="0 0 1443 1019.72"><path d="M180 175 L180 270" fill="none" stroke="#141414" stroke-width="5" /><path d="M88 95 Q178 449 268 95" fill="none" stroke="#141414" stroke-width="11" /><rect x="68" y="58" width="40" height="40" fill="#fff" stroke="#141414" stroke-width="11"/><rect x="248" y="58" width="40" height="40" fill="#fff" stroke="#141414" stroke-width="11"/><rect x="162" y="140" width="40" height="40" fill="#fff" stroke="#141414" stroke-width="11"/><path d="M440 270 L600 270" fill="none" stroke="#141414" stroke-width="5" /><path d="M460 90 C560 190 590 262 440 270" fill="none" stroke="#141414" stroke-width="11" /><rect x="427" y="58" width="40" height="40" fill="#fff" stroke="#141414" stroke-width="11"/><rect x="405" y="250" width="40" height="40" fill="#fff" stroke="#141414" stroke-width="11"/><rect x="595" y="250" width="40" height="40" fill="#fff" stroke="#141414" stroke-width="11"/><path d="M778 242 L828 112 L930 212" fill="none" stroke="#141414" stroke-width="11" /><rect x="813" y="80" width="40" height="40" fill="#fff" stroke="#141414" stroke-width="11"/><rect x="752" y="238" width="40" height="40" fill="#fff" stroke="#141414" stroke-width="11"/><rect x="920" y="202" width="40" height="40" fill="#fff" stroke="#141414" stroke-width="11"/><path d="M1025 287 v58 h-58 z" fill="#8f9095"/><path d="M1135 232 L1252 113" fill="none" stroke="#141414" stroke-width="11" /><rect x="1245" y="80" width="40" height="40" fill="#fff" stroke="#141414" stroke-width="11"/><rect x="1100" y="225" width="40" height="40" fill="#fff" stroke="#141414" stroke-width="11"/><path d="M50 385 Q175 395 190 500 Q200 612 300 632" fill="none" stroke="#858585" stroke-width="17" /><path d="M182 510 L182 608" fill="none" stroke="#141414" stroke-width="12" /><rect x="162" y="475" width="40" height="40" fill="#fff" stroke="#141414" stroke-width="11"/><rect x="162" y="602" width="40" height="40" fill="#fff" stroke="#141414" stroke-width="11"/><path d="M388 385 Q500 392 515 500 Q535 615 640 632" fill="none" stroke="#858585" stroke-width="17" /><path d="M520 497 L615 497" fill="none" stroke="#141414" stroke-width="12" /><rect x="487" y="477" width="40" height="40" fill="#fff" stroke="#141414" stroke-width="11"/><rect x="608" y="477" width="40" height="40" fill="#fff" stroke="#141414" stroke-width="11"/><path d="M752 505 L953.174 422.016" fill="none" stroke="#18a818" stroke-width="11" /><polygon points="992,406 958.894,435.882 947.454,408.149" fill="#18a818"/><path d="M752 505 L953.117 587.123" fill="none" stroke="#e01010" stroke-width="11" /><polygon points="992,603 947.446,601.01 958.787,573.236" fill="#e01010"/><circle cx="752" cy="505" r="17" fill="#141414"/><path d="M880 415 L880 500" fill="none" stroke="#141414" stroke-width="11" /><rect x="860" y="382" width="40" height="40" fill="#fff" stroke="#141414" stroke-width="11"/><rect x="860" y="492" width="40" height="40" fill="#fff" stroke="#141414" stroke-width="11"/><circle cx="1218" cy="530" r="90" fill="url(#lsph)" stroke="#141414" stroke-width="11"/><path d="M1110 428 L1180 500" fill="none" stroke="#141414" stroke-width="11" /><circle cx="1155" cy="470" r="12" fill="#141414"/><rect x="1077" y="395" width="40" height="40" fill="#fff" stroke="#141414" stroke-width="11"/><rect x="1172" y="492" width="40" height="40" fill="#fff" stroke="#141414" stroke-width="11"/><circle cx="178" cy="838" r="110" fill="none" stroke="#141414" stroke-width="11"/><path d="M182 835 L255 768" fill="none" stroke="#141414" stroke-width="5" /><rect x="162" y="815" width="40" height="40" fill="#fff" stroke="#141414" stroke-width="11"/><rect x="235" y="748" width="40" height="40" fill="#fff" stroke="#141414" stroke-width="11"/><path d="M355 957 v58 h-58 z" fill="#8f9095"/><path d="M545 715 Q570 790 650 810 M440 962 Q510 920 580 962" fill="none" stroke="#858585" stroke-width="13" /><circle cx="510" cy="838" r="98" fill="none" stroke="#141414" stroke-width="11"/><path d="M437 775 L520 835" fill="none" stroke="#141414" stroke-width="7" /><rect x="417" y="755" width="40" height="40" fill="#fff" stroke="#141414" stroke-width="11"/><rect x="500" y="815" width="40" height="40" fill="#fff" stroke="#141414" stroke-width="11"/><circle cx="850" cy="838" r="110" fill="none" stroke="#141414" stroke-width="11"/><path d="M928 765 L772 920" fill="none" stroke="#141414" stroke-width="5" /><rect x="908" y="745" width="40" height="40" fill="#fff" stroke="#141414" stroke-width="11"/><rect x="752" y="900" width="40" height="40" fill="#fff" stroke="#141414" stroke-width="11"/><circle cx="1185" cy="838" r="108" fill="none" stroke="#141414" stroke-width="11"/><path d="M1075 840 L1278.99 758.571" fill="none" stroke="#18a818" stroke-width="11" /><polygon points="1318,743 1284.55,772.502 1273.43,744.64" fill="#18a818"/><path d="M1075 840 L1278.99 921.429" fill="none" stroke="#e01010" stroke-width="11" /><polygon points="1318,937 1273.43,935.36 1284.55,907.498" fill="#e01010"/><circle cx="1075" cy="840" r="14" fill="#141414"/><path d="M1192 835 L1290 835" fill="none" stroke="#141414" stroke-width="7" /><rect x="1172" y="815" width="40" height="40" fill="#fff" stroke="#141414" stroke-width="11"/><rect x="1270" y="815" width="40" height="40" fill="#fff" stroke="#141414" stroke-width="11"/></svg>
<svg style="left:0;top:414px" width="150" height="107" viewBox="0 0 1443 1029.34"><path d="M100 100 L100 270" fill="none" stroke="#141414" stroke-width="5" /><path d="M112 275 L255 190" fill="none" stroke="#141414" stroke-width="5" /><path d="M115 82 Q225 105 262 172" fill="none" stroke="#141414" stroke-width="11" /><rect x="80" y="68" width="40" height="40" fill="#fff" stroke="#141414" stroke-width="11"/><rect x="248" y="162" width="40" height="40" fill="#fff" stroke="#141414" stroke-width="11"/><rect x="80" y="262" width="40" height="40" fill="#fff" stroke="#141414" stroke-width="11"/><path d="M355 294 v58 h-58 z" fill="#8f9095"/><path d="M440 85 Q600 120 620 265" fill="none" stroke="#141414" stroke-width="11" /><rect x="405" y="68" width="40" height="40" fill="#fff" stroke="#141414" stroke-width="11"/><rect x="512" y="90" width="40" height="40" fill="#fff" stroke="#141414" stroke-width="11"/><rect x="595" y="262" width="40" height="40" fill="#fff" stroke="#141414" stroke-width="11"/><path d="M952 100 L952 268" fill="none" stroke="#141414" stroke-width="5" /><path d="M775 85 Q920 110 948 265" fill="none" stroke="#141414" stroke-width="11" /><rect x="740" y="68" width="40" height="40" fill="#fff" stroke="#141414" stroke-width="11"/><rect x="932" y="68" width="40" height="40" fill="#fff" stroke="#141414" stroke-width="11"/><rect x="930" y="262" width="40" height="40" fill="#fff" stroke="#141414" stroke-width="11"/><path d="M1195 60 L1080 175" fill="none" stroke="#858585" stroke-width="13" /><path d="M1280 205 L1325 200" fill="none" stroke="#858585" stroke-width="13" /><path d="M1235 240 L1220 295" fill="none" stroke="#858585" stroke-width="13" /><path d="M1160 108 Q1300 70 1270 215" fill="none" stroke="#141414" stroke-width="8" /><rect x="1127" y="104" width="36" height="36" fill="#fff" stroke="#141414" stroke-width="11"/><rect x="1240" y="90" width="36" height="36" fill="#fff" stroke="#141414" stroke-width="11"/><rect x="1172" y="164" width="36" height="36" fill="#fff" stroke="#141414" stroke-width="11"/><rect x="1237" y="214" width="36" height="36" fill="#fff" stroke="#141414" stroke-width="11"/><ellipse cx="182" cy="530" rx="115" ry="80" fill="none" stroke="#141414" stroke-width="11"/><path d="M182 445 L182 532 L292 532" fill="none" stroke="#141414" stroke-width="5" /><rect x="162" y="425" width="40" height="40" fill="#fff" stroke="#141414" stroke-width="11"/><rect x="162" y="512" width="40" height="40" fill="#fff" stroke="#141414" stroke-width="11"/><rect x="272" y="512" width="40" height="40" fill="#fff" stroke="#141414" stroke-width="11"/><path d="M355 634 v58 h-58 z" fill="#8f9095"/><ellipse cx="518" cy="520" rx="125" ry="82" fill="none" stroke="#141414" stroke-width="11"/><path d="M410 515 L628 515" fill="none" stroke="#141414" stroke-width="5" /><rect x="498" y="415" width="40" height="40" fill="#fff" stroke="#141414" stroke-width="11"/><rect x="390" y="500" width="40" height="40" fill="#fff" stroke="#141414" stroke-width="11"/><rect x="608" y="500" width="40" height="40" fill="#fff" stroke="#141414" stroke-width="11"/><rect x="758" y="458" width="197" height="122" fill="none" stroke="#141414" stroke-width="11"/><rect x="932" y="440" width="40" height="40" fill="#fff" stroke="#141414" stroke-width="11"/><rect x="740" y="560" width="40" height="40" fill="#fff" stroke="#141414" stroke-width="11"/><path d="M1025 634 v58 h-58 z" fill="#8f9095"/><rect x="1095" y="458" width="200" height="122" fill="none" stroke="#141414" stroke-width="11"/><rect x="1077" y="440" width="40" height="40" fill="#fff" stroke="#141414" stroke-width="11"/><rect x="1077" y="560" width="40" height="40" fill="#fff" stroke="#141414" stroke-width="11"/><rect x="1282" y="525" width="40" height="40" fill="#fff" stroke="#141414" stroke-width="11"/><rect x="92" y="790" width="193" height="145" rx="42" fill="none" stroke="#141414" stroke-width="11"/><rect x="65" y="762" width="40" height="40" fill="#fff" stroke="#141414" stroke-width="11"/><rect x="128" y="762" width="40" height="40" fill="#fff" stroke="#141414" stroke-width="11"/><rect x="65" y="825" width="40" height="40" fill="#fff" stroke="#141414" stroke-width="11"/><rect x="458" y="757" width="127" height="198" fill="none" stroke="#141414" stroke-width="11"/><path d="M415 860 L612.573 787.473" fill="none" stroke="#18a818" stroke-width="11" /><polygon points="652,773 617.742,801.555 607.404,773.392" fill="#18a818"/><path d="M415 860 L608.653 932.308" fill="none" stroke="#e01010" stroke-width="11" /><polygon points="648,947 603.406,946.361 613.9,918.256" fill="#e01010"/><circle cx="415" cy="860" r="15" fill="#141414"/><rect x="438" y="742" width="40" height="40" fill="#fff" stroke="#141414" stroke-width="11"/><rect x="560" y="812" width="40" height="40" fill="#fff" stroke="#141414" stroke-width="11"/><rect x="438" y="930" width="40" height="40" fill="#fff" stroke="#141414" stroke-width="11"/><polygon points="752,850 800,765 905,765 955,850 905,935 800,935" fill="none" stroke="#141414" stroke-width="10"/><path d="M855 848 L940 848" fill="none" stroke="#141414" stroke-width="5" /><rect x="835" y="828" width="40" height="40" fill="#fff" stroke="#141414" stroke-width="11"/><rect x="920" y="828" width="40" height="40" fill="#fff" stroke="#141414" stroke-width="11"/><path d="M1025 962 v58 h-58 z" fill="#8f9095"/><rect x="1100" y="768" width="175" height="170" fill="none" stroke="#141414" stroke-width="11"/><path d="M1190 848 L1265 775" fill="none" stroke="#141414" stroke-width="5" /><rect x="1170" y="828" width="40" height="40" fill="#fff" stroke="#141414" stroke-width="11"/><rect x="1245" y="755" width="40" height="40" fill="#fff" stroke="#141414" stroke-width="11"/></svg>
<svg style="left:0;top:521px" width="150" height="40" viewBox="0 298.200 1443 384.800"><rect x="92" y="378" width="173" height="164" fill="none" stroke="#141414" stroke-width="11"/><rect x="80" y="358" width="40" height="40" fill="#fff" stroke="#141414" stroke-width="11"/><rect x="235" y="358" width="40" height="40" fill="#fff" stroke="#141414" stroke-width="11"/><polygon points="405,455 470,430 487,345 535,405 600,390 590,470 628,525 550,520 487,572 478,495" fill="none" stroke="#141414" stroke-width="11"/><rect x="511" y="431" width="38" height="38" fill="#fff" stroke="#141414" stroke-width="11"/><rect x="573" y="431" width="38" height="38" fill="#fff" stroke="#141414" stroke-width="11"/><rect x="596" y="359" width="38" height="38" fill="#fff" stroke="#141414" stroke-width="11"/></svg>
<div class="a" style="left:2px;top:595px;width:146px;height:398px;background:#ebecf0;border-radius:6px 6px 0 0;"></div>
<div class="a" style="left:48px;top:619px;width:100px;height:24.5px;background:#d8d9de;border-radius:0 0 0 7px;"></div>
<span class="t" style="left:3.00px;top:596.68px;font-size:14.50px;letter-spacing:-0.180px;color:#686c78;">Osnap</span>
<svg style="left:0;top:619px" width="150" height="26" viewBox="0 0 150 26"><circle cx="22.500" cy="12.500" r="8.300" fill="none" stroke="#222" stroke-width="1"/><rect x="20.500" y="10" width="4.500" height="4.500" fill="#fff" stroke="#111" stroke-width="1.300"/><path d="M25 12.300h9" stroke="#111" stroke-width="1.300"/><defs><linearGradient id="fn" x1="0" y1="0" x2="1" y2="0"><stop offset="0" stop-color="#888"/><stop offset="0.500" stop-color="#eee"/><stop offset="1" stop-color="#777"/></linearGradient></defs><path d="M62 5.500q6.500-2 13 0l-5 6.500v6l-3 1.500v-7.500z" fill="url(#fn)" stroke="#222" stroke-width="1"/><ellipse cx="68.500" cy="5.500" rx="6.300" ry="1.500" fill="#ddd" stroke="#222" stroke-width="0.800"/><path d="M74 3.500h3.500v3.500M60.500 17v3.500h3.500" fill="none" stroke="#222" stroke-width="1.200"/></svg><svg style="left:126.5px;top:598.5px" width="17" height="17" viewBox="126.5 598.5 17 17"><polygon points="142.46,607.74 142.18,609.18 139.76,609.55 139.17,610.43 139.76,612.80 138.54,613.61 136.57,612.17 135.53,612.37 134.26,614.46 132.82,614.18 132.45,611.76 131.57,611.17 129.20,611.76 128.39,610.54 129.83,608.57 129.63,607.53 127.54,606.26 127.82,604.82 130.24,604.45 130.83,603.57 130.24,601.20 131.46,600.39 133.43,601.83 134.47,601.63 135.74,599.54 137.18,599.82 137.55,602.24 138.43,602.83 140.80,602.24 141.61,603.46 140.17,605.43 140.37,606.47" fill="#cfd0d5"/><circle cx="135" cy="607" r="2.7" fill="#ebecf0"/></svg>
<div class="a" style="left:5.2px;top:650.7px;width:15.5px;height:15.5px;background:#fff;border:1px solid #b4bcdc"></div>
<svg style="left:5.5px;top:650.7px" width="15" height="15"><path d="M2.600 7.600l3.600 3.800L12.600 3.200" fill="none" stroke="#1a1a1a" stroke-width="2.200"/></svg>
<span class="t" style="left:27.50px;top:648.28px;font-size:14.50px;letter-spacing:-1.150px;color:#1b1b1b;">End</span>
<div class="a" style="left:5.2px;top:670.7px;width:15.5px;height:15.5px;background:#fff;border:1px solid #b4bcdc"></div>
<span class="t" style="left:27.50px;top:668.28px;font-size:14.50px;letter-spacing:0.023px;color:#1b1b1b;">Near</span>
<div class="a" style="left:5.2px;top:690.7px;width:15.5px;height:15.5px;background:#fff;border:1px solid #b4bcdc"></div>
<span class="t" style="left:27.50px;top:688.28px;font-size:14.50px;letter-spacing:-0.013px;color:#1b1b1b;">Point</span>
<div class="a" style="left:5.2px;top:710.7px;width:15.5px;height:15.5px;background:#fff;border:1px solid #b4bcdc"></div>
<svg style="left:5.5px;top:710.7px" width="15" height="15"><path d="M2.600 7.600l3.600 3.800L12.600 3.200" fill="none" stroke="#1a1a1a" stroke-width="2.200"/></svg>
<span class="t" style="left:27.50px;top:708.28px;font-size:14.50px;letter-spacing:0.817px;color:#1b1b1b;">Mid</span>
<div class="a" style="left:5.2px;top:730.7px;width:15.5px;height:15.5px;background:#fff;border:1px solid #b4bcdc"></div>
<svg style="left:5.5px;top:730.7px" width="15" height="15"><path d="M2.600 7.600l3.600 3.800L12.600 3.200" fill="none" stroke="#1a1a1a" stroke-width="2.200"/></svg>
<span class="t" style="left:27.50px;top:728.28px;font-size:14.50px;letter-spacing:-1.300px;color:#1b1b1b;">Cen</span>
<div class="a" style="left:5.2px;top:750.7px;width:15.5px;height:15.5px;background:#fff;border:1px solid #b4bcdc"></div>
<svg style="left:5.5px;top:750.7px" width="15" height="15"><path d="M2.600 7.600l3.600 3.800L12.600 3.200" fill="none" stroke="#1a1a1a" stroke-width="2.200"/></svg>
<span class="t" style="left:27.50px;top:748.28px;font-size:14.50px;letter-spacing:0.189px;color:#1b1b1b;">Int</span>
<div class="a" style="left:5.2px;top:770.7px;width:15.5px;height:15.5px;background:#fff;border:1px solid #b4bcdc"></div>
<span class="t" style="left:27.50px;top:768.28px;font-size:14.50px;letter-spacing:-0.877px;color:#1b1b1b;">Perp</span>
<div class="a" style="left:5.2px;top:790.7px;width:15.5px;height:15.5px;background:#fff;border:1px solid #b4bcdc"></div>
<span class="t" style="left:27.50px;top:788.28px;font-size:14.50px;letter-spacing:-1.439px;color:#1b1b1b;">Tan</span>
<div class="a" style="left:5.2px;top:810.7px;width:15.5px;height:15.5px;background:#fff;border:1px solid #b4bcdc"></div>
<svg style="left:5.5px;top:810.7px" width="15" height="15"><path d="M2.600 7.600l3.600 3.800L12.600 3.200" fill="none" stroke="#1a1a1a" stroke-width="2.200"/></svg>
<span class="t" style="left:27.50px;top:808.28px;font-size:14.50px;letter-spacing:-0.491px;color:#1b1b1b;">Quad</span>
<div class="a" style="left:5.2px;top:830.7px;width:15.5px;height:15.5px;background:#fff;border:1px solid #b4bcdc"></div>
<span class="t" style="left:27.50px;top:828.28px;font-size:14.50px;letter-spacing:0.224px;color:#1b1b1b;">Knot</span>
<div class="a" style="left:5.2px;top:850.7px;width:15.5px;height:15.5px;background:#fff;border:1px solid #b4bcdc"></div>
<span class="t" style="left:27.50px;top:848.28px;font-size:14.50px;letter-spacing:-0.122px;color:#1b1b1b;">Vertex</span>
<div class="a" style="left:5.2px;top:870.7px;width:15.5px;height:15.5px;background:#fff;border:1px solid #b4bcdc"></div>
<span class="t" style="left:27.50px;top:868.28px;font-size:14.50px;letter-spacing:0.062px;color:#1b1b1b;">Project</span>
<div class="a" style="left:5.2px;top:891.2px;width:15.5px;height:15.5px;background:#fff;border:1px solid #b4bcdc"></div>
<span class="t" style="left:27.50px;top:888.78px;font-size:14.50px;letter-spacing:0.190px;color:#1b1b1b;">Disable</span>
<div class="a" style="left:152px;top:196px;width:1457px;height:769px;background:#c2c9e0;"></div>
<svg style="left:153px;top:196px" width="1455" height="768" viewBox="153 196 1455 768"><defs><clipPath id="vc"><rect x="153" y="196" width="1455" height="768"/></clipPath></defs>
<g clip-path="url(#vc)">
<rect x="153" y="196" width="1455" height="768" fill="#9da3ab"/>
<path d="M-2999.5 5347.9 L-484.2 -374.8 M-3005.0 5267.3 L4912.5 3747.4 M-2954.4 5339.1 L-472.0 -375.4 M-2966.1 5179.9 L4873.7 3690.4 M-2909.4 5330.4 L-459.8 -376.1 M-2928.1 5094.4 L4835.6 3634.3 M-2864.6 5321.7 L-447.6 -376.8 M-2890.9 5010.7 L4798.2 3579.2 M-2775.1 5304.3 L-423.2 -378.2 M-2818.8 4848.7 L4725.3 3471.9 M-2730.5 5295.7 L-411.0 -378.9 M-2783.9 4770.2 L4689.8 3419.6 M-2686.0 5287.0 L-398.9 -379.6 M-2749.8 4693.4 L4654.8 3368.1 M-2641.6 5278.4 L-386.7 -380.3 M-2716.3 4618.1 L4620.5 3317.6 M-2553.1 5261.3 L-362.4 -381.7 M-2651.3 4472.0 L4553.5 3218.9 M-2509.0 5252.7 L-350.3 -382.4 M-2619.8 4401.1 L4520.8 3170.8 M-2465.0 5244.2 L-338.2 -383.0 M-2588.9 4331.6 L4488.6 3123.4 M-2421.1 5235.7 L-326.0 -383.7 M-2558.6 4263.5 L4457.0 3076.9 M-2333.6 5218.7 L-301.8 -385.1 M-2499.7 4131.1 L4395.2 2985.9 M-2290.0 5210.2 L-289.7 -385.8 M-2471.1 4066.7 L4365.0 2941.5 M-2246.5 5201.8 L-277.6 -386.5 M-2443.0 4003.6 L4335.3 2897.7 M-2203.0 5193.4 L-265.6 -387.2 M-2415.5 3941.6 L4306.0 2854.7 M-2116.5 5176.6 L-241.4 -388.5 M-2361.9 3821.1 L4248.9 2770.5 M-2073.3 5168.2 L-229.4 -389.2 M-2335.8 3762.5 L4220.9 2729.4 M-2030.3 5159.9 L-217.3 -389.9 M-2310.2 3704.9 L4193.4 2688.9 M-1987.3 5151.5 L-205.3 -390.6 M-2285.0 3648.3 L4166.3 2649.0 M-1901.7 5134.9 L-181.2 -392.0 M-2236.0 3538.1 L4113.3 2570.9 M-1859.0 5126.6 L-169.2 -392.6 M-2212.2 3484.4 L4087.3 2532.7 M-1816.4 5118.4 L-157.2 -393.3 M-2188.7 3431.6 L4061.8 2495.1 M-1773.9 5110.1 L-145.2 -394.0 M-2165.6 3379.8 L4036.6 2458.0 M-1689.2 5093.7 L-121.2 -395.4 M-2120.7 3278.6 L3987.2 2385.3 M-1646.9 5085.5 L-109.2 -396.0 M-2098.7 3229.3 L3963.1 2349.8 M-1604.8 5077.3 L-97.2 -396.7 M-2077.1 3180.8 L3939.3 2314.7 M-1562.8 5069.2 L-85.3 -397.4 M-2055.9 3133.0 L3915.8 2280.1 M-1478.9 5052.9 L-61.3 -398.8 M-2014.5 3039.9 L3869.8 2212.4 M-1437.2 5044.8 L-49.4 -399.4 M-1994.3 2994.4 L3847.2 2179.2 M-1395.5 5036.7 L-37.5 -400.1 M-1974.4 2949.6 L3825.0 2146.5 M-1353.9 5028.7 L-25.5 -400.8 M-1954.8 2905.6 L3803.1 2114.2 M-1270.9 5012.6 L-1.7 -402.1 M-1916.5 2819.5 L3760.0 2050.9 M-1229.6 5004.6 L10.2 -402.8 M-1897.8 2777.4 L3739.0 2019.8 M-1188.4 4996.6 L22.1 -403.5 M-1879.4 2736.0 L3718.1 1989.2 M-1147.2 4988.6 L34.0 -404.2 M-1861.2 2695.2 L3697.6 1958.9 M-1065.2 4972.7 L57.8 -405.5 M-1825.7 2615.4 L3657.3 1899.6 M-1024.3 4964.7 L69.6 -406.2 M-1808.4 2576.4 L3637.5 1870.5 M-983.4 4956.8 L81.5 -406.9 M-1791.3 2537.9 L3618.0 1841.8 M-942.7 4948.9 L93.3 -407.5 M-1774.5 2500.1 L3598.7 1813.4 M-861.5 4933.2 L117.0 -408.9 M-1741.5 2425.9 L3560.9 1757.7 M-821.1 4925.3 L128.9 -409.6 M-1725.3 2389.6 L3542.3 1730.4 M-780.7 4917.5 L140.7 -410.2 M-1709.4 2353.8 L3524.0 1703.4 M-740.4 4909.7 L152.5 -410.9 M-1693.7 2318.5 L3505.9 1676.7 M-660.0 4894.1 L176.1 -412.2 M-1663.0 2249.4 L3470.3 1624.3 M-620.0 4886.3 L187.9 -412.9 M-1648.0 2215.6 L3452.8 1598.6 M-580.0 4878.5 L199.7 -413.6 M-1633.1 2182.2 L3435.5 1573.1 M-540.1 4870.8 L211.5 -414.2 M-1618.5 2149.3 L3418.5 1548.0 M-460.6 4855.4 L235.0 -415.6 M-1589.8 2084.7 L3384.9 1498.6 M-421.0 4847.7 L246.8 -416.2 M-1575.7 2053.1 L3368.5 1474.4 M-381.4 4840.0 L258.5 -416.9 M-1561.8 2021.9 L3352.2 1450.4 M-342.0 4832.4 L270.2 -417.6 M-1548.1 1991.1 L3336.1 1426.7 M-263.3 4817.1 L293.7 -418.9 M-1521.3 1930.7 L3304.4 1380.1 M-224.1 4809.5 L305.4 -419.6 M-1508.1 1901.0 L3288.9 1357.2 M-184.9 4801.9 L317.1 -420.2 M-1495.1 1871.8 L3273.5 1334.5 M-145.9 4794.3 L328.8 -420.9 M-1482.2 1842.9 L3258.2 1312.1 M-68.0 4779.2 L352.2 -422.2 M-1457.0 1786.2 L3228.3 1268.1 M-29.2 4771.7 L363.9 -422.9 M-1444.7 1758.4 L3213.6 1246.4 M9.6 4764.2 L375.6 -423.6 M-1432.4 1730.9 L3199.0 1225.0 M48.2 4756.7 L387.3 -424.2 M-1420.4 1703.8 L3184.6 1203.8 M125.3 4741.7 L410.6 -425.5 M-1396.7 1650.5 L3156.3 1162.0 M163.7 4734.3 L422.2 -426.2 M-1385.0 1624.3 L3142.3 1141.5 M202.1 4726.8 L433.9 -426.9 M-1373.6 1598.5 L3128.5 1121.2 M240.4 4719.4 L445.5 -427.5 M-1362.2 1572.9 L3114.9 1101.1 M316.7 4704.6 L468.7 -428.8 M-1339.9 1522.8 L3088.0 1061.5 M354.7 4697.2 L480.4 -429.5 M-1328.9 1498.1 L3074.8 1042.1 M392.6 4689.9 L492.0 -430.2 M-1318.1 1473.7 L3061.7 1022.8 M430.5 4682.5 L503.6 -430.8 M-1307.4 1449.7 L3048.7 1003.7 M506.1 4667.9 L526.7 -432.1 M-1286.3 1402.3 L3023.2 966.1 M543.7 4660.6 L538.3 -432.8 M-1276.0 1379.1 L3010.6 947.6 M581.3 4653.3 L549.9 -433.5 M-1265.7 1356.1 L2998.2 929.3 M618.8 4646.0 L561.4 -434.1 M-1255.6 1333.3 L2985.9 911.2 M693.5 4631.5 L584.5 -435.4 M-1235.7 1288.6 L2961.6 875.5 M730.8 4624.3 L596.1 -436.1 M-1226.0 1266.6 L2949.7 857.9 M768.0 4617.1 L607.6 -436.7 M-1216.3 1244.8 L2937.8 840.4 M805.1 4609.9 L619.1 -437.4 M-1206.7 1223.3 L2926.1 823.2 M879.1 4595.5 L642.1 -438.7 M-1187.9 1181.0 L2903.0 789.2 M916.0 4588.4 L653.6 -439.3 M-1178.6 1160.1 L2891.6 772.4 M952.9 4581.2 L665.1 -440.0 M-1169.5 1139.5 L2880.3 755.8 M989.6 4574.1 L676.6 -440.6 M-1160.4 1119.1 L2869.2 739.4 M1062.9 4559.9 L699.6 -442.0 M-1142.6 1079.0 L2847.1 706.9 M1099.4 4552.8 L711.1 -442.6 M-1133.8 1059.3 L2836.3 691.0 M1135.9 4545.7 L722.5 -443.3 M-1125.1 1039.7 L2825.5 675.1 M1172.3 4538.7 L734.0 -443.9 M-1116.5 1020.4 L2814.9 659.4 M1244.8 4524.6 L756.9 -445.2 M-1099.5 982.3 L2793.9 628.5 M1281.0 4517.6 L768.3 -445.9 M-1091.2 963.5 L2783.5 613.2 M1317.1 4510.6 L779.7 -446.5 M-1083.0 945.0 L2773.2 598.1 M1353.1 4503.6 L791.1 -447.1 M-1074.8 926.6 L2763.1 583.2 M1424.9 4489.7 L813.9 -448.4 M-1058.7 890.4 L2743.0 553.6 M1460.7 4482.7 L825.3 -449.1 M-1050.8 872.6 L2733.1 539.0 M1496.5 4475.8 L836.7 -449.7 M-1042.9 854.9 L2723.3 524.6 M1532.1 4468.9 L848.1 -450.4 M-1035.1 837.4 L2713.6 510.3 M1603.3 4455.1 L870.8 -451.7 M-1019.8 803.0 L2694.4 482.0 M1638.7 4448.2 L882.2 -452.3 M-1012.3 786.0 L2684.9 468.1 M1674.1 4441.3 L893.6 -453.0 M-1004.8 769.2 L2675.5 454.2 M1709.4 4434.5 L904.9 -453.6 M-997.4 752.6 L2666.2 440.5 M1779.9 4420.8 L927.6 -454.9 M-982.8 719.7 L2647.8 413.5 M1815.0 4414.0 L938.9 -455.5 M-975.6 703.6 L2638.8 400.1 M1850.0 4407.2 L950.2 -456.2 M-968.5 687.5 L2629.8 386.9 M1885.0 4400.4 L961.5 -456.8 M-961.4 671.7 L2620.9 373.8 M1954.8 4386.9 L984.1 -458.1 M-947.5 640.4 L2603.2 347.9 M1989.5 4380.1 L995.4 -458.7 M-940.6 624.9 L2594.6 335.1 M2024.2 4373.4 L1006.7 -459.4 M-933.8 609.6 L2585.9 322.4 M2058.9 4366.7 L1018.0 -460.0 M-927.1 594.5 L2577.4 309.8 M2127.9 4353.3 L1040.5 -461.3 M-913.8 564.6 L2560.5 285.0 M2162.4 4346.6 L1051.8 -461.9 M-907.3 549.8 L2552.2 272.7 M2196.7 4339.9 L1063.0 -462.6 M-900.8 535.2 L2543.9 260.5 M2231.1 4333.3 L1074.3 -463.2 M-894.3 520.7 L2535.7 248.5 M2299.5 4320.0 L1096.7 -464.5 M-881.6 492.2 L2519.5 224.6 M2333.6 4313.4 L1108.0 -465.1 M-875.3 478.1 L2511.5 212.8 M2367.6 4306.8 L1119.2 -465.8 M-869.1 464.1 L2503.6 201.1 M2401.6 4300.2 L1130.4 -466.4 M-863.0 450.3 L2495.7 189.6 M2469.3 4287.1 L1152.8 -467.7 M-850.8 422.9 L2480.1 166.6 M2503.1 4280.5 L1164.0 -468.3 M-844.8 409.4 L2472.5 155.3 M2536.8 4274.0 L1175.2 -468.9 M-838.9 396.0 L2464.8 144.1 M2570.5 4267.5 L1186.3 -469.6 M-833.0 382.8 L2457.3 133.0 M2637.6 4254.4 L1208.7 -470.9 M-821.3 356.6 L2442.3 110.9 M2671.0 4247.9 L1219.8 -471.5 M-815.6 343.7 L2434.9 100.1 M2704.4 4241.5 L1231.0 -472.1 M-809.9 330.9 L2427.6 89.3 M2737.7 4235.0 L1242.1 -472.7 M-804.2 318.1 L2420.3 78.5 M2804.2 4222.1 L1264.4 -474.0 M-793.1 293.0 L2405.9 57.4 M2837.3 4215.7 L1275.5 -474.6 M-787.5 280.6 L2398.8 46.9 M2870.4 4209.3 L1286.6 -475.3 M-782.1 268.4 L2391.7 36.5 M2903.4 4202.9 L1297.7 -475.9 M-776.7 256.2 L2384.7 26.2 M2969.3 4190.1 L1319.9 -477.2 M-766.0 232.1 L2370.9 5.8 M3002.1 4183.7 L1331.0 -477.8 M-760.7 220.2 L2364.0 -4.3 M3034.9 4177.4 L1342.0 -478.4 M-755.4 208.4 L2357.2 -14.3 M3067.6 4171.0 L1353.1 -479.1 M-750.2 196.7 L2350.5 -24.2 M3132.8 4158.4 L1375.2 -480.3 M-739.9 173.6 L2337.1 -43.9 M3165.3 4152.1 L1386.3 -480.9 M-734.8 162.1 L2330.5 -53.6 M3197.8 4145.8 L1397.3 -481.6 M-729.8 150.8 L2324.0 -63.2 M3230.1 4139.5 L1408.4 -482.2 M-724.8 139.5 L2317.5 -72.8 M3294.8 4127.0 L1430.4 -483.4 M-714.9 117.3 L2304.6 -91.8 M3327.0 4120.7 L1441.5 -484.1 M-710.0 106.3 L2298.3 -101.1 M3359.1 4114.5 L1452.5 -484.7 M-705.2 95.4 L2291.9 -110.4 M3391.2 4108.3 L1463.5 -485.3 M-700.4 84.6 L2285.7 -119.7 M3455.2 4095.8 L1485.5 -486.6 M-690.9 63.3 L2273.2 -137.9 M3487.1 4089.6 L1496.4 -487.2 M-686.2 52.7 L2267.1 -147.0 M3519.0 4083.5 L1507.4 -487.8 M-681.5 42.2 L2261.0 -156.0 M3550.8 4077.3 L1518.4 -488.4 M-676.9 31.8 L2255.0 -164.9 M3614.2 4065.0 L1540.3 -489.7 M-667.7 11.2 L2243.0 -182.5 M3645.8 4058.9 L1551.3 -490.3 M-663.2 1.1 L2237.0 -191.2 M3677.4 4052.7 L1562.2 -490.9 M-658.7 -9.0 L2231.2 -199.9 M3708.9 4046.6 L1573.2 -491.5 M-654.3 -19.1 L2225.3 -208.5 M3771.7 4034.5 L1595.0 -492.8 M-645.5 -38.9 L2213.7 -225.6 M3803.0 4028.4 L1605.9 -493.4 M-641.1 -48.7 L2208.0 -234.0 M3834.3 4022.3 L1616.8 -494.0 M-636.8 -58.4 L2202.3 -242.4 M3865.5 4016.3 L1627.7 -494.6 M-632.5 -68.1 L2196.7 -250.7 M3927.7 4004.2 L1649.5 -495.9 M-624.0 -87.2 L2185.5 -267.2 M3958.8 3998.2 L1660.4 -496.5 M-619.8 -96.6 L2179.9 -275.3 M3989.8 3992.2 L1671.3 -497.1 M-615.6 -106.0 L2174.4 -283.4 M4020.7 3986.2 L1682.2 -497.7 M-611.5 -115.3 L2169.0 -291.5 M4082.4 3974.2 L1703.9 -499.0 M-603.3 -133.7 L2158.2 -307.4 M4113.1 3968.2 L1714.7 -499.6 M-599.2 -142.8 L2152.8 -315.3 M4143.8 3962.3 L1725.6 -500.2 M-595.2 -151.9 L2147.5 -323.1 M4174.4 3956.3 L1736.4 -500.8 M-591.2 -160.9 L2142.2 -330.9 M4235.6 3944.5 L1758.1 -502.0 M-583.3 -178.6 L2131.7 -346.3 M4266.0 3938.6 L1768.9 -502.7 M-579.4 -187.4 L2126.5 -353.9 M4296.5 3932.7 L1779.7 -503.3 M-575.5 -196.2 L2121.4 -361.5 M4326.8 3926.8 L1790.5 -503.9 M-571.7 -204.9 L2116.3 -369.0 M4387.4 3915.0 L1812.1 -505.1 M-564.0 -222.0 L2106.1 -383.9 M4417.6 3909.2 L1822.9 -505.7 M-560.2 -230.5 L2101.1 -391.3 M4447.7 3903.3 L1833.7 -506.3 M-556.5 -239.0 L2096.1 -398.7 M4477.8 3897.5 L1844.5 -506.9 M-552.8 -247.3 L2091.2 -406.0 M4537.8 3885.8 L1866.0 -508.2 M-545.4 -263.9 L2081.4 -420.4 M4567.8 3880.0 L1876.8 -508.8 M-541.7 -272.1 L2076.5 -427.6 M4597.6 3874.2 L1887.5 -509.4 M-538.1 -280.3 L2071.7 -434.7 M4627.4 3868.5 L1898.2 -510.0 M-534.5 -288.4 L2066.9 -441.8 M4686.9 3856.9 L1919.7 -511.2 M-527.4 -304.4 L2057.4 -455.8 M4716.6 3851.2 L1930.4 -511.8 M-523.8 -312.4 L2052.7 -462.7 M4746.2 3845.4 L1941.1 -512.4 M-520.3 -320.3 L2048.0 -469.6 M4775.7 3839.7 L1951.9 -513.0 M-516.9 -328.1 L2043.3 -476.4 M4834.7 3828.3 L1973.3 -514.3 M-510.0 -343.6 L2034.1 -490.0 M4864.1 3822.6 L1983.9 -514.9 M-506.5 -351.3 L2029.5 -496.7 M4893.4 3816.9 L1994.6 -515.5 M-503.1 -358.9 L2025.0 -503.4 M4922.7 3811.2 L2005.3 -516.1 M-499.8 -366.5 L2020.5 -510.1" stroke="#949aa3" stroke-width="1" fill="none"/>
<path d="M-3044.7 5356.6 L-496.4 -374.1 M-3044.7 5356.6 L4951.9 3805.5 M-2819.8 5313.0 L-435.4 -377.5 M-2854.5 4928.9 L4761.4 3525.1 M-2597.3 5269.8 L-374.6 -381.0 M-2683.5 4544.3 L4586.7 3267.8 M-2377.3 5227.2 L-313.9 -384.4 M-2528.9 4196.6 L4425.8 3031.0 M-2159.7 5185.0 L-253.5 -387.9 M-2388.4 3880.8 L4277.2 2812.3 M-1944.4 5143.2 L-193.2 -391.3 M-2260.3 3592.7 L4139.6 2609.6 M-1731.5 5101.9 L-133.2 -394.7 M-2143.0 3328.8 L4011.7 2421.4 M-1520.8 5061.0 L-73.3 -398.1 M-2035.0 3086.1 L3892.6 2246.0 M-1312.4 5020.6 L-13.6 -401.5 M-1935.5 2862.2 L3781.4 2082.3 M-1106.1 4980.6 L45.9 -404.8 M-1843.4 2655.0 L3677.3 1929.1 M-902.1 4941.0 L105.2 -408.2 M-1757.8 2462.7 L3579.7 1785.4 M-700.2 4901.9 L164.3 -411.6 M-1678.3 2283.8 L3488.0 1650.3 M-500.3 4863.1 L223.2 -414.9 M-1604.0 2116.8 L3401.6 1523.2 M-302.6 4824.7 L282.0 -418.2 M-1534.6 1960.7 L3320.2 1403.3 M-106.9 4786.8 L340.5 -421.6 M-1469.6 1814.4 L3243.2 1290.0 M86.8 4749.2 L398.9 -424.9 M-1408.5 1677.0 L3170.4 1182.8 M278.6 4712.0 L457.1 -428.2 M-1351.0 1547.7 L3101.4 1081.2 M468.3 4675.2 L515.1 -431.5 M-1296.8 1425.9 L3035.9 984.8 M656.2 4638.8 L573.0 -434.8 M-1245.6 1310.8 L2973.7 893.2 M842.2 4602.7 L630.6 -438.0 M-1197.3 1202.0 L2914.5 806.1 M1026.3 4567.0 L688.1 -441.3 M-1151.4 1099.0 L2858.1 723.1 M1208.6 4531.6 L745.4 -444.6 M-1108.0 1001.2 L2804.3 643.9 M1389.0 4496.6 L942.2 729.5 M-1066.7 908.4 L942.2 729.5 M1567.7 4461.9 L859.5 -451.0 M-1027.4 820.1 L2703.9 496.1 M1744.7 4427.6 L916.3 -454.3 M-990.1 736.1 L2657.0 427.0 M1919.9 4393.6 L972.8 -457.5 M-954.4 655.9 L2612.0 360.8 M2093.4 4360.0 L1029.3 -460.7 M-920.4 579.5 L2568.9 297.3 M2265.3 4326.6 L1085.5 -463.9 M-887.9 506.4 L2527.6 236.5 M2435.5 4293.6 L1141.6 -467.0 M-856.9 436.5 L2487.9 178.1 M2604.0 4260.9 L1197.5 -470.2 M-827.1 369.6 L2449.8 121.9 M2771.0 4228.6 L1253.2 -473.4 M-798.6 305.5 L2413.1 67.9 M2936.4 4196.5 L1308.8 -476.5 M-771.3 244.1 L2377.8 16.0 M3100.2 4164.7 L1364.2 -479.7 M-745.0 185.1 L2343.8 -34.1 M3262.5 4133.2 L1419.4 -482.8 M-719.8 128.4 L2311.0 -82.3 M3423.2 4102.0 L1474.5 -485.9 M-695.6 73.9 L2279.4 -128.8 M3582.5 4071.1 L1529.4 -489.1 M-672.3 21.5 L2248.9 -173.7 M3740.3 4040.5 L1584.1 -492.2 M-649.9 -29.0 L2219.5 -217.1 M3896.6 4010.2 L1638.6 -495.3 M-628.2 -77.6 L2191.0 -259.0 M4051.5 3980.2 L1693.0 -498.3 M-607.4 -124.5 L2163.5 -299.4 M4205.0 3950.4 L1747.3 -501.4 M-587.3 -169.8 L2136.9 -338.6 M4357.1 3920.9 L1801.3 -504.5 M-567.8 -213.5 L2111.2 -376.5 M4507.8 3891.7 L1855.2 -507.6 M-549.1 -255.7 L2086.3 -413.2 M4657.2 3862.7 L1909.0 -510.6 M-530.9 -296.4 L2062.1 -448.8 M4805.2 3834.0 L1962.6 -513.6 M-513.4 -335.9 L2038.7 -483.2 M4951.9 3805.5 L2016.0 -516.7 M-496.4 -374.1 L2016.0 -516.7" stroke="#848991" stroke-width="1" fill="none"/>
<path d="M942.2 729.5 L2753.0 568.3" stroke="#964646" stroke-width="2" fill="none"/>
<path d="M942.2 729.5 L802.5 -447.8" stroke="#4b964b" stroke-width="2.1" fill="none"/>
<polygon points="1438.3,417.5 1471.7,417.5 1482.5,454.2 1460.0,488.3" fill="#485a7d" stroke="none" stroke-width="1" />
<polygon points="1471.7,417.5 1495.0,417.5 1499.2,432.5 1608.0,424.2 1608.0,444.2 1482.5,454.2" fill="#2860bb" stroke="none" stroke-width="1" />
<polygon points="1482.5,454.2 1608.0,444.2 1608.0,476.7 1460.0,488.3" fill="#083c96" stroke="none" stroke-width="1" />
<polygon points="1575.0,349.9 1608.0,347.5 1608.0,369.7 1575.0,373.2" fill="#2860bb" stroke="none" stroke-width="1" />
<polygon points="1575.0,373.2 1608.0,369.7 1608.0,393.3 1599.2,404.7 1575.0,407.2" fill="#083c96" stroke="none" stroke-width="1" />
<polygon points="1599.2,404.7 1608.0,393.3 1608.0,423.3 1605.0,423.7" fill="#485a7d" stroke="none" stroke-width="1" />
<line x1="1438.3" y1="417.5" x2="1460.0" y2="488.3" stroke="#0a64ff" stroke-width="2.2" stroke-linecap="round"/>
<line x1="1460.0" y1="488.3" x2="1608.0" y2="476.7" stroke="#0a64ff" stroke-width="2.2" stroke-linecap="round"/>
<line x1="1460.0" y1="488.3" x2="1482.5" y2="454.2" stroke="#0a64ff" stroke-width="2.2" stroke-linecap="round"/>
<line x1="1482.5" y1="454.2" x2="1608.0" y2="444.2" stroke="#0a64ff" stroke-width="2.2" stroke-linecap="round"/>
<line x1="1482.5" y1="454.2" x2="1471.7" y2="417.5" stroke="#0a64ff" stroke-width="2.2" stroke-linecap="round"/>
<line x1="1495.0" y1="417.5" x2="1499.2" y2="432.5" stroke="#0a64ff" stroke-width="2.2" stroke-linecap="round"/>
<line x1="1499.2" y1="432.5" x2="1608.0" y2="424.2" stroke="#0a64ff" stroke-width="2.2" stroke-linecap="round"/>
<line x1="1575.0" y1="349.9" x2="1608.0" y2="347.5" stroke="#0a64ff" stroke-width="2.2" stroke-linecap="round"/>
<line x1="1575.0" y1="373.2" x2="1608.0" y2="369.7" stroke="#0a64ff" stroke-width="2.2" stroke-linecap="round"/>
<line x1="1575.0" y1="407.2" x2="1599.2" y2="404.7" stroke="#0a64ff" stroke-width="2.2" stroke-linecap="round"/>
<line x1="1599.2" y1="404.7" x2="1608.0" y2="393.3" stroke="#0a64ff" stroke-width="2.2" stroke-linecap="round"/>
<line x1="1599.2" y1="404.7" x2="1605.0" y2="423.7" stroke="#0a64ff" stroke-width="2.2" stroke-linecap="round"/>
<polygon points="1330.4,196.0 1354.7,196.0 1362.3,218.9 1378.4,283.6 1358.4,329.2 1341.0,262.9 1324.3,208.8" fill="#336131" stroke="none" stroke-width="1" />
<polygon points="1354.7,196.0 1432.3,196.0 1440.0,215.0 1440.0,280.0 1378.4,283.6 1362.3,218.9" fill="#34b72a" stroke="none" stroke-width="1" />
<polygon points="1378.4,283.6 1440.0,279.5 1440.0,324.0 1358.4,329.2" fill="#1b960c" stroke="none" stroke-width="1" />
<line x1="1330.4" y1="196.0" x2="1324.3" y2="208.8" stroke="#14f514" stroke-width="2.4" stroke-linecap="round"/>
<line x1="1324.3" y1="208.8" x2="1341.0" y2="262.9" stroke="#14f514" stroke-width="2.4" stroke-linecap="round"/>
<line x1="1341.0" y1="262.9" x2="1358.4" y2="329.2" stroke="#14f514" stroke-width="2.4" stroke-linecap="round"/>
<line x1="1354.7" y1="196.0" x2="1362.3" y2="218.9" stroke="#14f514" stroke-width="2.4" stroke-linecap="round"/>
<line x1="1362.3" y1="218.9" x2="1378.4" y2="283.6" stroke="#14f514" stroke-width="2.4" stroke-linecap="round"/>
<line x1="1362.3" y1="218.9" x2="1341.0" y2="262.9" stroke="#14f514" stroke-width="2.4" stroke-linecap="round"/>
<line x1="1378.4" y1="283.6" x2="1358.4" y2="329.2" stroke="#14f514" stroke-width="2.4" stroke-linecap="round"/>
<line x1="1362.3" y1="218.9" x2="1440.0" y2="213.5" stroke="#14f514" stroke-width="2.4" stroke-linecap="round"/>
<line x1="1378.4" y1="283.6" x2="1440.0" y2="279.5" stroke="#14f514" stroke-width="2.4" stroke-linecap="round"/>
<line x1="1358.4" y1="329.2" x2="1440.0" y2="324.0" stroke="#14f514" stroke-width="2.4" stroke-linecap="round"/>
<line x1="1432.3" y1="196.0" x2="1440.0" y2="215.0" stroke="#14f514" stroke-width="2.4" stroke-linecap="round"/>
<polygon points="1087.2,380.1 1078.4,421.3 1090.6,488.2 1099.4,450.0" fill="#396434" stroke="none" stroke-width="1" />
<polygon points="1087.2,380.1 1235.3,366.6 1251.6,436.8 1099.4,450.0" fill="#34b72a" stroke="none" stroke-width="1" />
<polygon points="1099.4,450.0 1176.9,443.1 1164.7,482.8 1090.6,488.2" fill="#1b960c" stroke="none" stroke-width="1" />
<polygon points="1176.9,443.1 1251.6,436.8 1235.7,475.0 1165.9,479.7" fill="#1b960c" stroke="none" stroke-width="1" />
<line x1="1087.2" y1="380.1" x2="1235.3" y2="366.6" stroke="#14f514" stroke-width="2.6" stroke-linecap="round"/>
<line x1="1235.3" y1="366.6" x2="1251.6" y2="436.8" stroke="#14f514" stroke-width="2.6" stroke-linecap="round"/>
<line x1="1251.6" y1="436.8" x2="1099.4" y2="450.0" stroke="#14f514" stroke-width="2.6" stroke-linecap="round"/>
<line x1="1099.4" y1="450.0" x2="1087.2" y2="380.1" stroke="#14f514" stroke-width="2.6" stroke-linecap="round"/>
<line x1="1162.9" y1="373.2" x2="1176.9" y2="443.1" stroke="#14f514" stroke-width="2.6" stroke-linecap="round"/>
<line x1="1087.2" y1="380.1" x2="1078.4" y2="421.3" stroke="#14f514" stroke-width="2.6" stroke-linecap="round"/>
<line x1="1078.4" y1="421.3" x2="1090.6" y2="488.2" stroke="#14f514" stroke-width="2.6" stroke-linecap="round"/>
<line x1="1090.6" y1="488.2" x2="1099.4" y2="450.0" stroke="#14f514" stroke-width="2.6" stroke-linecap="round"/>
<line x1="1090.6" y1="488.2" x2="1164.7" y2="482.8" stroke="#14f514" stroke-width="2.6" stroke-linecap="round"/>
<line x1="1176.9" y1="443.1" x2="1164.7" y2="482.8" stroke="#14f514" stroke-width="2.6" stroke-linecap="round"/>
<line x1="1165.9" y1="479.7" x2="1235.7" y2="475.0" stroke="#14f514" stroke-width="2.6" stroke-linecap="round"/>
<line x1="1235.7" y1="475.0" x2="1251.6" y2="436.8" stroke="#14f514" stroke-width="2.6" stroke-linecap="round"/>
<polygon points="814.9,264.1 923.2,291.4 925.4,388.8 812.4,420.9 744.9,340.3" fill="none" stroke="#f2f200" stroke-width="1.5" />
<path d="M772.5 371.3 Q 836 339.5 880.8 400.8" fill="none" stroke="#f2f200" stroke-width="1.5"/>
<polygon points="771.8,371.8 786.0,369.0 782.8,362.5" fill="#f2f200" stroke="none" stroke-width="1" />
<polygon points="881.2,401.0 877.6,387.0 871.3,390.5" fill="#f2f200" stroke="none" stroke-width="1" />
<text x="0" y="0" transform="translate(803,351) rotate(13) skewX(-8)" font-family="Liberation Sans,sans-serif" font-size="18.5" fill="#f2f200" textLength="73" lengthAdjust="spacingAndGlyphs">108.00°</text>
<line x1="930.5" y1="292.1" x2="974.3" y2="292.1" stroke="#f2f200" stroke-width="1.5" />
<line x1="934.6" y1="388.8" x2="980.1" y2="388.8" stroke="#f2f200" stroke-width="1.5" />
<line x1="968.8" y1="293.2" x2="971.8" y2="388.1" stroke="#f2f200" stroke-width="1.5" />
<polygon points="968.7,292.6 965.5,307.7 972.7,307.5" fill="#f2f200" stroke="none" stroke-width="1" />
<polygon points="971.9,388.4 975.1,373.3 967.9,373.5" fill="#f2f200" stroke="none" stroke-width="1" />
<text x="0" y="0" transform="translate(964.5,358) rotate(-88)" font-family="Liberation Sans,sans-serif" font-size="18.5" fill="#f2f200" textLength="37" lengthAdjust="spacingAndGlyphs">7.55</text>
<polygon points="1022.6,269.1 1146.7,254.2 1230.6,326.0 1078.0,378.8" fill="none" stroke="#f2f200" stroke-width="1.5" />
<line x1="1151.6" y1="249.8" x2="1196.2" y2="216.4" stroke="#f2f200" stroke-width="1.5" />
<line x1="1236.1" y1="322.3" x2="1280.7" y2="286.7" stroke="#f2f200" stroke-width="1.5" />
<line x1="1192.6" y1="220.8" x2="1275.0" y2="290.5" stroke="#f2f200" stroke-width="1.5" />
<polygon points="1192.2,220.4 1201.2,233.0 1206.1,227.2" fill="#f2f200" stroke="none" stroke-width="1" />
<polygon points="1275.4,290.9 1266.5,278.3 1261.5,284.0" fill="#f2f200" stroke="none" stroke-width="1" />
<text x="0" y="0" transform="matrix(0.764,0.646,-0.744,0.558,1221,241.1)" font-family="Liberation Sans,sans-serif" font-size="20" fill="#f2f200" textLength="39" lengthAdjust="spacingAndGlyphs">7.71</text>
<polygon points="1115.9,714.1 1115.1,709.8 1114.2,705.6 1113.2,701.4 1112.1,697.2 1110.8,693.1 1109.5,689.0 1108.0,684.9 1106.5,680.9 1104.8,676.9 1103.0,672.9 1101.1,669.0 1099.1,665.2 1097.0,661.4 1094.8,657.7 1092.6,654.0 1090.2,650.4 1087.7,646.8 1085.1,643.3 1082.5,639.9 1079.7,636.5 1076.9,633.2 1074.0,630.0 1071.0,626.8 1067.9,623.7 1064.8,620.7 1061.5,617.8 1058.2,614.9 1054.8,612.2 1051.4,609.5 1047.9,606.9 1044.3,604.4 1040.7,601.9 1037.0,599.6 1033.2,597.3 1029.4,595.2 1025.5,593.1 1021.6,591.1 1017.7,589.2 1013.7,587.4 1009.6,585.7 1005.5,584.1 1001.4,582.6 997.2,581.2 993.0,579.9 988.8,578.7 984.6,577.6 980.3,576.6 976.0,575.6 971.7,574.8 967.3,574.1 963.0,573.5 958.6,573.0 954.2,572.6 949.9,572.3 945.5,572.1 941.1,572.0 936.7,572.0 932.3,572.1 928.0,572.4 923.6,572.7 919.2,573.1 914.9,573.6 910.6,574.2 906.3,575.0 902.0,575.8 897.7,576.7 893.5,577.8 889.3,578.9 885.1,580.1 880.9,581.5 876.8,582.9 872.8,584.4 868.8,586.0 864.8,587.7 860.8,589.6 857.0,591.5 853.1,593.5 849.3,595.6 845.6,597.7 842.0,600.0 838.4,602.4 834.8,604.8 831.3,607.4 827.9,610.0 824.6,612.7 821.3,615.5 818.2,618.3 815.0,621.3 812.0,624.3 809.1,627.4 806.2,630.6 803.4,633.8 800.7,637.1 798.1,640.5 795.6,644.0 793.2,647.5 790.8,651.1 788.6,654.7 786.5,658.4 784.4,662.1 782.5,665.9 780.7,669.8 778.9,673.7 777.3,677.7 775.8,681.7 774.4,685.7 773.1,689.8 771.9,693.9 770.9,698.0 769.9,702.2 769.1,706.4 768.3,710.7 767.7,714.9 767.2,719.2 766.9,723.5 766.6,727.8 766.5,732.1 766.5,736.5 766.6,740.8 766.8,745.2 767.2,749.5 767.6,753.8 768.2,758.2 769.0,762.5 769.8,766.8 770.8,771.1 771.8,775.4 773.0,779.7 774.4,783.9 775.8,788.1 777.4,792.3 779.1,796.4 780.9,800.5 782.8,804.6 784.8,808.6 787.0,812.6 789.2,816.5 791.6,820.4 794.1,824.2 796.7,828.0 799.4,831.7 802.2,835.3 805.1,838.9 808.2,842.4 811.3,845.8 814.5,849.1 817.8,852.4 821.2,855.6 824.7,858.7 828.3,861.7 832.0,864.6 835.8,867.5 839.6,870.2 843.5,872.9 847.5,875.4 851.6,877.8 855.8,880.2 860.0,882.4 864.2,884.6 868.6,886.6 873.0,888.5 877.4,890.3 881.9,892.0 886.5,893.6 891.1,895.0 895.7,896.3 900.4,897.6 905.1,898.7 909.8,899.6 914.5,900.5 919.3,901.2 924.1,901.8 928.9,902.3 933.7,902.7 938.6,902.9 943.4,903.0 948.2,903.0 953.1,902.9 957.9,902.6 962.7,902.2 967.5,901.7 972.2,901.1 977.0,900.3 981.7,899.4 986.4,898.4 991.0,897.3 995.7,896.1 1000.2,894.7 1004.8,893.2 1009.2,891.6 1013.7,889.9 1018.0,888.1 1022.3,886.2 1026.6,884.1 1030.8,882.0 1034.9,879.7 1038.9,877.3 1042.9,874.9 1046.8,872.3 1050.6,869.6 1054.3,866.9 1058.0,864.0 1061.5,861.1 1065.0,858.0 1068.4,854.9 1071.6,851.7 1074.8,848.4 1077.9,845.1 1080.9,841.6 1083.7,838.1 1086.5,834.5 1089.2,830.9 1091.7,827.2 1094.1,823.4 1096.5,819.6 1098.7,815.7 1100.8,811.8 1102.8,807.8 1104.6,803.7 1106.4,799.7 1108.0,795.6 1109.5,791.4 1110.9,787.2 1112.2,783.0 1113.3,778.8 1114.3,774.5 1115.2,770.2 1116.0,765.9 1116.7,761.6 1117.2,757.3 1117.6,753.0 1117.9,748.6 1118.1,744.3 1118.1,739.9 1118.1,735.6 1117.9,731.3 1117.6,726.9 1117.1,722.6 1116.6,718.3" fill="none" stroke="#ff1010" stroke-width="1.6" />
<line x1="933.2" y1="730.9" x2="950.9" y2="729.4" stroke="#ff1010" stroke-width="1.8" />
<line x1="941.5" y1="722.1" x2="943.3" y2="738.5" stroke="#ff1010" stroke-width="1.8" />
<path d="M1083.5 640.8L1150.6 598.4L1167.2 596.9" fill="none" stroke="#ff1010" stroke-width="1.5"/>
<polygon points="1083.5,640.8 1098.3,635.2 1094.9,629.8" fill="#ff1010" stroke="none" stroke-width="1" />
<text x="0" y="0" transform="translate(1172.5,603.8) rotate(-4.2)" font-family="Liberation Sans,sans-serif" font-size="21" fill="#ff1010" textLength="73.5" lengthAdjust="spacingAndGlyphs">R10.08</text>
<path d="M193.800 887.600L197.200 919.700L233.400 916.700M197.600 919.500V903.700" fill="none" stroke="#5a5e64" stroke-width="1.2"/>
<text x="196.400" y="887.200" font-family="Liberation Sans,sans-serif" font-size="16" fill="#5a5e64">y</text>
<text x="199.600" y="904" font-family="Liberation Sans,sans-serif" font-size="16" fill="#5a5e64">z</text>
<text x="236.800" y="917.800" font-family="Liberation Sans,sans-serif" font-size="16" fill="#5a5e64">x</text>
</g>
<path d="M153 196h114v20.300a2.500 2.500 0 0 1-2.500 2.500h-111.500z" fill="#6ba2fd"/>
<path d="M253.800 198v19.500" stroke="#222" stroke-width="1.2"/><path d="M254.700 204.200h9.500l-4.750 4.600z" fill="#222"/>
<text x="163.600" y="211.800" font-family="Liberation Sans,sans-serif" font-size="14.500" font-weight="bold" fill="#2a2420" textLength="79" lengthAdjust="spacingAndGlyphs">Perspective</text>
</svg>
<div class="a" style="left:152px;top:965.5px;width:99.5px;height:26px;background:#edeef2;border:1px solid #c6cadb;border-top:none;border-radius:0 0 5px 5px;"></div>
<span class="t" style="left:166.00px;top:968.48px;font-size:14.50px;letter-spacing:-0.126px;color:#1f1f1f;">Perspective</span>
<span class="t" style="left:262.00px;top:968.48px;font-size:14.50px;letter-spacing:1.061px;color:#6d6f7a;">Top</span>
<span class="t" style="left:310.00px;top:968.48px;font-size:14.50px;letter-spacing:0.289px;color:#6d6f7a;">Front</span>
<span class="t" style="left:365.00px;top:968.48px;font-size:14.50px;letter-spacing:0.537px;color:#6d6f7a;">Right</span>
<svg style="left:423px;top:973px" width="12" height="12"><path d="M4.5 1.5h3v3h3v3h-3v3h-3v-3h-3v-3h3z" fill="none" stroke="#777"/></svg>
<div class="a" style="left:0px;top:992px;width:1919px;height:28px;background:#e9eaee;"></div>
<div class="a" style="left:0px;top:1017.5px;width:1919px;height:2.5px;background:#d8d9de;"></div>
<div class="a" style="left:1026.5px;top:993.5px;width:64px;height:23.5px;background:#d3d9f0;border-radius:3px;"></div>
<div class="a" style="left:1094px;top:993.5px;width:98.5px;height:23.5px;background:#d3d9f0;border-radius:3px;"></div>
<div class="a" style="left:1196.5px;top:993.5px;width:140.5px;height:23.5px;background:#d3d9f0;border-radius:3px;"></div>
<div class="a" style="left:1655px;top:993.5px;width:55px;height:23.5px;background:#d3d9f0;border-radius:3px;"></div>
<span class="t" style="left:52.50px;top:995.98px;font-size:14.50px;letter-spacing:-0.512px;color:#3a3a3a;">CPlane</span>
<span class="t" style="left:147.50px;top:995.98px;font-size:14.50px;letter-spacing:-0.161px;color:#3a3a3a;">x 16.884</span>
<span class="t" style="left:255.00px;top:995.98px;font-size:14.50px;letter-spacing:0.087px;color:#3a3a3a;">y -1.179</span>
<span class="t" style="left:378.50px;top:995.98px;font-size:14.50px;letter-spacing:-0.171px;color:#3a3a3a;">z 0</span>
<span class="t" style="left:466.50px;top:995.98px;font-size:14.50px;letter-spacing:0.322px;color:#3a3a3a;">Millimeters</span>
<span class="t" style="left:598.00px;top:995.98px;font-size:14.50px;letter-spacing:-0.276px;color:#3a3a3a;">Layer 03</span>
<span class="t" style="left:818.00px;top:995.98px;font-size:14.50px;letter-spacing:-0.098px;color:#3a3a3a;">Grid Snap</span>
<span class="t" style="left:908.00px;top:995.98px;font-size:14.50px;letter-spacing:0.434px;color:#3a3a3a;">Ortho</span>
<span class="t" style="left:972.00px;top:995.98px;font-size:14.50px;letter-spacing:-0.183px;color:#3a3a3a;">Planar</span>
<span class="t" style="left:1037.50px;top:995.98px;font-size:14.50px;letter-spacing:-0.281px;font-weight:bold;color:#1b1b1b;">Osnap</span>
<span class="t" style="left:1104.50px;top:995.98px;font-size:14.50px;letter-spacing:0.001px;font-weight:bold;color:#1b1b1b;">SmartTrack</span>
<span class="t" style="left:1206.00px;top:995.98px;font-size:14.50px;letter-spacing:0.110px;font-weight:bold;color:#1b1b1b;">Gumball (CPlane)</span>
<span class="t" style="left:1373.50px;top:995.98px;font-size:14.50px;letter-spacing:0.052px;color:#3a3a3a;">Auto CPlane (Object)</span>
<span class="t" style="left:1542.50px;top:995.98px;font-size:14.50px;letter-spacing:0.047px;color:#3a3a3a;">Record History</span>
<span class="t" style="left:1665.50px;top:995.98px;font-size:14.50px;letter-spacing:0.010px;font-weight:bold;color:#1b1b1b;">Filter</span>
<div class="a" style="left:1728px;top:995px;width:118px;height:22px;overflow:hidden"><span class="t" style="left:0.00px;top:0.98px;font-size:14.50px;letter-spacing:0.199px;color:#3a3a3a;">Absolute tolerance</span></div>
<div class="a" style="left:570px;top:996px;width:20px;height:20px;background:#ff0000;border:1px solid #222;"></div>
<svg style="left:8.7px;top:996.8px" width="18" height="18"><rect x="1.5" y="1.5" width="15" height="15" fill="#ebecf0" stroke="#444" stroke-width="2"/><rect x="2" y="2" width="5.500" height="14" fill="#444"/></svg>
<svg style="left:1892.8px;top:996.6px" width="18" height="18"><rect x="1.5" y="1.5" width="15" height="15" fill="#ebecf0" stroke="#444" stroke-width="2"/><rect x="10.500" y="2" width="5.500" height="14" fill="#444"/></svg>
<svg style="left:1346px;top:996px" width="16" height="18"><rect x="2.5" y="7.5" width="11" height="9" rx="1" fill="#eee" stroke="#aaa"/><path d="M4.5 7.5v-2.5a3.5 3.5 0 0 1 7 0v2.5" fill="none" stroke="#aaa" stroke-width="1.4"/></svg>
<div class="a" style="left:1612px;top:194px;width:305.5px;height:69px;background:#ebecf0;border-radius:6px 6px 6px 0;"></div>
<div class="a" style="left:1612px;top:263px;width:281px;height:728.5px;background:#ebecf0;"></div>
<div class="a" style="left:1893px;top:263px;width:26px;height:728.5px;background:#d8d9de;border-radius:7px 0 0 0;"></div>
<div class="a" style="left:1612px;top:217px;width:292px;height:1px;background:#dfe0e5;"></div>
<span class="t" style="left:1613.00px;top:196.48px;font-size:14.50px;letter-spacing:-0.505px;color:#686c78;">Layers</span>
<svg style="left:1610px;top:220px" width="309" height="65" viewBox="0 0 1919 403.700"><defs><linearGradient id="bt" x1="0" y1="0" x2="0" y2="1"><stop offset="0" stop-color="#b8c6ff"/><stop offset="1" stop-color="#6f86ee"/></linearGradient><radialGradient id="hb" cx="0.4" cy="0.3" r="0.8"><stop offset="0" stop-color="#6a86f0"/><stop offset="1" stop-color="#1a2a9a"/></radialGradient></defs><g transform="translate(43,73) scale(0.95)" opacity="1"><polygon points="4.0,2.0 47.0,60.0 47.0,74.4 3.2,20.2" fill="#ff5a14"/><polygon points="3.2,20.2 47.0,74.4 47.0,85.8 2.6,34.6" fill="#ffffff"/><polygon points="2.6,34.6 47.0,85.8 47.0,98.0 2.0,50.0" fill="#3c5ad8"/><polygon points="47.0,60.0 98.0,40.0 97.6,52.2 47.0,74.4" fill="#e01c10" opacity="0.25"/><polygon points="47.0,74.4 97.6,52.2 97.3,61.8 47.0,85.8" fill="#f0f0f0" opacity="0.25"/><polygon points="47.0,85.8 97.3,61.8 97.0,72.0 47.0,98.0" fill="#1a2c90" opacity="0.25"/><polygon points="4.0,2.0 100.0,24.0 98.0,40.0 47.0,60.0" fill="#ff8a58"/><polygon points="4.0,2.0 100.0,24.0 98.0,40.0 97.0,72.0 47.0,98.0 2.0,50.0" fill="none" stroke="#1a1a1a" stroke-width="6" stroke-linejoin="round" opacity="0.35"/><path d="M2 50L4 2M4 2L100 24" stroke="#1a1a1a" stroke-width="7" fill="none"/></g><path d="M100 150 L145 150" fill="none" stroke="#141414" stroke-width="13" /><path d="M122 128 L122 172" fill="none" stroke="#141414" stroke-width="13" /><g transform="translate(210,60) scale(0.6)" opacity="1"><polygon points="4.0,2.0 47.0,60.0 47.0,74.4 3.2,20.2" fill="#ff5a14"/><polygon points="3.2,20.2 47.0,74.4 47.0,85.8 2.6,34.6" fill="#ffffff"/><polygon points="2.6,34.6 47.0,85.8 47.0,98.0 2.0,50.0" fill="#3c5ad8"/><polygon points="47.0,60.0 98.0,40.0 97.6,52.2 47.0,74.4" fill="#e01c10" opacity="1"/><polygon points="47.0,74.4 97.6,52.2 97.3,61.8 47.0,85.8" fill="#f0f0f0" opacity="1"/><polygon points="47.0,85.8 97.3,61.8 97.0,72.0 47.0,98.0" fill="#1a2c90" opacity="1"/><polygon points="4.0,2.0 100.0,24.0 98.0,40.0 47.0,60.0" fill="#ff8a58"/><polygon points="4.0,2.0 100.0,24.0 98.0,40.0 97.0,72.0 47.0,98.0 2.0,50.0" fill="none" stroke="#1a1a1a" stroke-width="6" stroke-linejoin="round" opacity="1"/><path d="M2 50L4 2M4 2L100 24" stroke="#1a1a1a" stroke-width="7" fill="none"/></g><g transform="translate(262,102) scale(0.6)" opacity="1"><polygon points="4.0,2.0 47.0,60.0 47.0,74.4 3.2,20.2" fill="#ff5a14"/><polygon points="3.2,20.2 47.0,74.4 47.0,85.8 2.6,34.6" fill="#ffffff"/><polygon points="2.6,34.6 47.0,85.8 47.0,98.0 2.0,50.0" fill="#3c5ad8"/><polygon points="47.0,60.0 98.0,40.0 97.6,52.2 47.0,74.4" fill="#e01c10" opacity="1"/><polygon points="47.0,74.4 97.6,52.2 97.3,61.8 47.0,85.8" fill="#f0f0f0" opacity="1"/><polygon points="47.0,85.8 97.3,61.8 97.0,72.0 47.0,98.0" fill="#1a2c90" opacity="1"/><polygon points="4.0,2.0 100.0,24.0 98.0,40.0 47.0,60.0" fill="#ff8a58"/><polygon points="4.0,2.0 100.0,24.0 98.0,40.0 97.0,72.0 47.0,98.0 2.0,50.0" fill="none" stroke="#1a1a1a" stroke-width="6" stroke-linejoin="round" opacity="1"/><path d="M2 50L4 2M4 2L100 24" stroke="#1a1a1a" stroke-width="7" fill="none"/></g><path d="M225 125 L225 160 L250 160" fill="none" stroke="#141414" stroke-width="8" /><path d="M248 148l16 12-16 12z" fill="#141414"/><path d="M387 72 L485 165" fill="none" stroke="#cc0808" stroke-width="24" /><path d="M485 72 L387 165" fill="none" stroke="#cc0808" stroke-width="24" /><circle cx="598" cy="115" r="48" fill="#e4e4e8" stroke="#bcbcc2" stroke-width="5"/><path d="M590 100L655 112L650 150L610 170L575 140Z" fill="#e9e9ec" stroke="#bcbcc2" stroke-width="5"/><path d="M600 62l28 8-20 16z" fill="#bcbcc2"/><path d="M728 135L775 80L825 135Z" fill="url(#bt)" stroke="#2a3a9a" stroke-width="7" stroke-linejoin="round"/><path d="M900 92H1000L950 150Z" fill="#e2e2e6" stroke="#bdbdc3" stroke-width="6" stroke-linejoin="round"/><path d="M1145 70V168L1085 118Z" fill="#e2e2e6" stroke="#bdbdc3" stroke-width="6" stroke-linejoin="round"/><path d="M1238 75Q1285 58 1332 75L1298 122V162L1274 172V122Z" fill="#4878e0" stroke="#142a80" stroke-width="7" stroke-linejoin="round"/><ellipse cx="1285" cy="76" rx="44" ry="9" fill="#9ab4ff" stroke="#142a80" stroke-width="5"/><rect x="1412" y="65" width="88" height="105" fill="#fff" stroke="#444" stroke-width="7"/><rect x="1412" y="65" width="88" height="14" fill="#333"/><path d="M1441 65 L1441 170" fill="none" stroke="#555" stroke-width="5" /><path d="M1470 65 L1470 170" fill="none" stroke="#555" stroke-width="5" /><path d="M1412 108 L1500 108" fill="none" stroke="#555" stroke-width="5" /><path d="M1412 138 L1500 138" fill="none" stroke="#555" stroke-width="5" /><path d="M1588 80 L1680 80" fill="none" stroke="#141414" stroke-width="13" /><path d="M1588 118 L1680 118" fill="none" stroke="#141414" stroke-width="13" /><path d="M1588 158 L1680 158" fill="none" stroke="#141414" stroke-width="13" /><g transform="translate(1783,80) scale(0.97)" opacity="1"><polygon points="4.0,2.0 47.0,60.0 47.0,74.4 3.2,20.2" fill="#ff5a14"/><polygon points="3.2,20.2 47.0,74.4 47.0,85.8 2.6,34.6" fill="#ffffff"/><polygon points="2.6,34.6 47.0,85.8 47.0,98.0 2.0,50.0" fill="#3c5ad8"/><polygon points="47.0,60.0 98.0,40.0 97.6,52.2 47.0,74.4" fill="#e01c10" opacity="1"/><polygon points="47.0,74.4 97.6,52.2 97.3,61.8 47.0,85.8" fill="#f0f0f0" opacity="1"/><polygon points="47.0,85.8 97.3,61.8 97.0,72.0 47.0,98.0" fill="#1a2c90" opacity="1"/><polygon points="4.0,2.0 100.0,24.0 98.0,40.0 47.0,60.0" fill="#ff8a58"/><polygon points="4.0,2.0 100.0,24.0 98.0,40.0 97.0,72.0 47.0,98.0 2.0,50.0" fill="none" stroke="#1a1a1a" stroke-width="6" stroke-linejoin="round" opacity="1"/><path d="M2 50L4 2M4 2L100 24" stroke="#1a1a1a" stroke-width="7" fill="none"/></g><circle cx="93" cy="292" r="56" fill="url(#hb)" stroke="#16227a" stroke-width="3"/><text x="93" y="332" text-anchor="middle" font-family="Liberation Serif,serif" font-weight="bold" font-size="112" fill="#fff">?</text></svg><svg style="left:1896.5px;top:197px" width="17" height="17" viewBox="1896.5 197 17 17"><polygon points="1912.46,206.24 1912.18,207.68 1909.76,208.05 1909.17,208.93 1909.76,211.30 1908.54,212.11 1906.57,210.67 1905.53,210.87 1904.26,212.96 1902.82,212.68 1902.45,210.26 1901.57,209.67 1899.20,210.26 1898.39,209.04 1899.83,207.07 1899.63,206.03 1897.54,204.76 1897.82,203.32 1900.24,202.95 1900.83,202.07 1900.24,199.70 1901.46,198.89 1903.43,200.33 1904.47,200.13 1905.74,198.04 1907.18,198.32 1907.55,200.74 1908.43,201.33 1910.80,200.74 1911.61,201.96 1910.17,203.93 1910.37,204.97" fill="#cfd0d5"/><circle cx="1905" cy="205.5" r="2.7" fill="#ebecf0"/></svg>
<div class="a" style="left:1613px;top:288px;width:274.5px;height:27px;background:#fff;border:1px solid #b6bfdf;border-radius:13.5px;"></div>
<svg style="left:1617px;top:293px" width="18" height="18"><circle cx="8" cy="8" r="5" fill="none" stroke="#222" stroke-width="1.6"/><path d="M11.8 11.8l4 4" stroke="#222" stroke-width="1.8"/></svg>
<span class="t" style="left:1635.30px;top:291.68px;font-size:14.50px;letter-spacing:-0.589px;color:#72747e;">Search</span>
<div class="a" style="left:1612px;top:323px;width:276px;height:668.5px;background:#fff;"></div>
<div class="a" style="left:1612px;top:351px;width:276px;height:1px;background:#ccd2e6;"></div>
<div class="a" style="left:1711px;top:323px;width:1px;height:28px;background:#dfe3f0;"></div>
<div class="a" style="left:1736px;top:323px;width:1px;height:28px;background:#dfe3f0;"></div>
<div class="a" style="left:1761px;top:323px;width:1px;height:28px;background:#dfe3f0;"></div>
<div class="a" style="left:1786px;top:323px;width:1px;height:28px;background:#dfe3f0;"></div>
<div class="a" style="left:1811px;top:323px;width:1px;height:28px;background:#dfe3f0;"></div>
<span class="t" style="left:1618.30px;top:327.98px;font-size:14.50px;letter-spacing:-0.393px;color:#1b1b1b;">Layer</span>
<span class="t" style="left:1818.30px;top:327.98px;font-size:14.50px;letter-spacing:0.375px;color:#1b1b1b;">Material</span>
<div class="a" style="left:1612px;top:423.5px;width:276px;height:22.5px;background:#73b9fb;"></div>
<div class="a" style="left:1711px;top:424px;width:1px;height:21.5px;background:#8cc6fc;"></div>
<div class="a" style="left:1736px;top:424px;width:1px;height:21.5px;background:#8cc6fc;"></div>
<div class="a" style="left:1761px;top:424px;width:1px;height:21.5px;background:#8cc6fc;"></div>
<div class="a" style="left:1786px;top:424px;width:1px;height:21.5px;background:#8cc6fc;"></div>
<div class="a" style="left:1811px;top:424px;width:1px;height:21.5px;background:#8cc6fc;"></div>
<div class="a" style="left:1612px;top:375px;width:276px;height:0;border-top:1px dotted #d0d3e0"></div>
<span class="t" style="left:1633.80px;top:353.28px;font-size:14.50px;letter-spacing:0.376px;color:#1b1b1b;">Default</span>
<div class="a" style="left:1790.5px;top:354.5px;width:18.5px;height:17.5px;background:#005aff;border:1.5px solid #1a1a1a;"></div>
<div class="a" style="left:1814.5px;top:355px;width:16.5px;height:16.5px;border-radius:50%;background:#fff;border:1.2px solid #333"></div>
<svg style="left:1743px;top:354.5px" width="13" height="18"><path d="M6.5 1C3.3 1 1.3 3.3 1.3 6c0 2.2 1.6 3.4 2.2 5.2.2.7.3 1.5.3 2.2h5.4c0-.7.1-1.5.3-2.2.6-1.8 2.2-3 2.2-5.200C11.700 3.300 9.700 1 6.500 1z" fill="#ffd21c" stroke="#c89600" stroke-width="1"/><path d="M4 14.500h5v1.500a1 1 0 0 1-1 1h-3a1 1 0 0 1-1-1z" fill="#c8960a"/><path d="M4 4.500c.5-1 1.300-1.700 2.500-1.900" stroke="#fff6c0" fill="none" stroke-width="1.200"/></svg>
<svg style="left:1767px;top:354px" width="17" height="18"><path d="M8.500 8v-3.200a3 3 0 0 1 6 0v1.700" fill="none" stroke="#b48c14" stroke-width="1.500"/><rect x="1.500" y="8" width="9.500" height="8" fill="#ffe14b" stroke="#c89b14"/><path d="M2.500 9h4v6h-4z" fill="#fff3a8"/></svg>
<div class="a" style="left:1612px;top:399px;width:276px;height:0;border-top:1px dotted #d0d3e0"></div>
<span class="t" style="left:1633.80px;top:377.28px;font-size:14.50px;letter-spacing:-0.461px;color:#1b1b1b;">Layer 01</span>
<div class="a" style="left:1790.5px;top:378.5px;width:18.5px;height:17.5px;background:#1eeb00;border:1.5px solid #1a1a1a;"></div>
<div class="a" style="left:1814.5px;top:379px;width:16.5px;height:16.5px;border-radius:50%;background:#fff;border:1.2px solid #333"></div>
<svg style="left:1743px;top:378.5px" width="13" height="18"><path d="M6.5 1C3.3 1 1.3 3.3 1.3 6c0 2.2 1.6 3.4 2.2 5.2.2.7.3 1.5.3 2.2h5.4c0-.7.1-1.5.3-2.2.6-1.8 2.2-3 2.2-5.200C11.700 3.300 9.700 1 6.500 1z" fill="#ffd21c" stroke="#c89600" stroke-width="1"/><path d="M4 14.500h5v1.500a1 1 0 0 1-1 1h-3a1 1 0 0 1-1-1z" fill="#c8960a"/><path d="M4 4.500c.5-1 1.300-1.700 2.500-1.900" stroke="#fff6c0" fill="none" stroke-width="1.200"/></svg>
<svg style="left:1767px;top:378px" width="17" height="18"><path d="M8.500 8v-3.200a3 3 0 0 1 6 0v1.700" fill="none" stroke="#b48c14" stroke-width="1.500"/><rect x="1.500" y="8" width="9.500" height="8" fill="#ffe14b" stroke="#c89b14"/><path d="M2.500 9h4v6h-4z" fill="#fff3a8"/></svg>
<div class="a" style="left:1612px;top:423px;width:276px;height:0;border-top:1px dotted #d0d3e0"></div>
<span class="t" style="left:1633.80px;top:401.28px;font-size:14.50px;letter-spacing:-0.390px;color:#1b1b1b;">Layer 02</span>
<div class="a" style="left:1790.5px;top:402.5px;width:18.5px;height:17.5px;background:#f0ff00;border:1.5px solid #1a1a1a;"></div>
<div class="a" style="left:1814.5px;top:403px;width:16.5px;height:16.5px;border-radius:50%;background:#fff;border:1.2px solid #333"></div>
<svg style="left:1743px;top:402.5px" width="13" height="18"><path d="M6.5 1C3.3 1 1.3 3.3 1.3 6c0 2.2 1.6 3.4 2.2 5.2.2.7.3 1.5.3 2.2h5.4c0-.7.1-1.5.3-2.2.6-1.8 2.2-3 2.2-5.200C11.700 3.300 9.700 1 6.500 1z" fill="#ffd21c" stroke="#c89600" stroke-width="1"/><path d="M4 14.500h5v1.500a1 1 0 0 1-1 1h-3a1 1 0 0 1-1-1z" fill="#c8960a"/><path d="M4 4.500c.5-1 1.300-1.700 2.500-1.900" stroke="#fff6c0" fill="none" stroke-width="1.200"/></svg>
<svg style="left:1767px;top:402px" width="17" height="18"><path d="M8.500 8v-3.200a3 3 0 0 1 6 0v1.700" fill="none" stroke="#b48c14" stroke-width="1.500"/><rect x="1.500" y="8" width="9.500" height="8" fill="#ffe14b" stroke="#c89b14"/><path d="M2.500 9h4v6h-4z" fill="#fff3a8"/></svg>
<span class="t" style="left:1633.80px;top:425.28px;font-size:14.50px;letter-spacing:-0.136px;font-weight:bold;color:#1b1b1b;">Layer 03</span>
<div class="a" style="left:1790.5px;top:426px;width:18.5px;height:17.5px;background:#ff0000;border:1.5px solid #1a1a1a;"></div>
<div class="a" style="left:1814.5px;top:426.5px;width:16.5px;height:16.5px;border-radius:50%;background:#fff;border:1.2px solid #333"></div>
<svg style="left:1716px;top:427px" width="17" height="16"><path d="M2 8.500l4.300 5L15 2.500" fill="none" stroke="#333" stroke-width="1.700"/></svg>
<div class="a" style="left:1621.5px;top:977.5px;width:98.5px;height:9.5px;background:#c9c9c9;border-radius:5px;"></div>
<svg style="left:1893px;top:263px" width="26" height="270" viewBox="1893 263 26 270"><path d="M1904.90 278.50 A6.2 6.2 0 0 1 1908.26 279.49" fill="none" stroke="#ff0000" stroke-width="3.600"/><path d="M1908.00 279.33 A6.2 6.2 0 0 1 1910.42 281.87" fill="none" stroke="#ff8000" stroke-width="3.600"/><path d="M1910.27 281.60 A6.2 6.2 0 0 1 1911.09 285.01" fill="none" stroke="#ffff00" stroke-width="3.600"/><path d="M1911.10 284.70 A6.2 6.2 0 0 1 1910.11 288.06" fill="none" stroke="#80ff00" stroke-width="3.600"/><path d="M1910.27 287.80 A6.2 6.2 0 0 1 1907.73 290.22" fill="none" stroke="#00ff00" stroke-width="3.600"/><path d="M1908.00 290.07 A6.2 6.2 0 0 1 1904.59 290.89" fill="none" stroke="#00ff80" stroke-width="3.600"/><path d="M1904.90 290.90 A6.2 6.2 0 0 1 1901.54 289.91" fill="none" stroke="#00ffff" stroke-width="3.600"/><path d="M1901.80 290.07 A6.2 6.2 0 0 1 1899.38 287.53" fill="none" stroke="#0080ff" stroke-width="3.600"/><path d="M1899.53 287.80 A6.2 6.2 0 0 1 1898.71 284.39" fill="none" stroke="#0000ff" stroke-width="3.600"/><path d="M1898.70 284.70 A6.2 6.2 0 0 1 1899.69 281.34" fill="none" stroke="#8000ff" stroke-width="3.600"/><path d="M1899.53 281.60 A6.2 6.2 0 0 1 1902.07 279.18" fill="none" stroke="#ff00ff" stroke-width="3.600"/><path d="M1901.80 279.33 A6.2 6.2 0 0 1 1905.21 278.51" fill="none" stroke="#ff0080" stroke-width="3.600"/><circle cx="1904.9" cy="284.7" r="8.300" fill="none" stroke="#111" stroke-width="0.900"/><circle cx="1904.9" cy="284.7" r="4.200" fill="#fff" stroke="#111" stroke-width="0.900"/><defs><linearGradient id="mon" x1="0" y1="0" x2="0" y2="1"><stop offset="0" stop-color="#f4f4f4"/><stop offset="1" stop-color="#9a9a9a"/></linearGradient></defs><rect x="1896.500" y="321.500" width="17" height="13.500" fill="url(#mon)" stroke="#111" stroke-width="1.800"/><path d="M1901 339.500h8l-1.500-3h-5z" fill="#111"/><rect x="1899" y="339" width="12" height="1.500" fill="#111"/><rect x="1896" y="366.500" width="18" height="17.500" fill="#3a52c8" stroke="#555" stroke-width="1"/><rect x="1896.500" y="367" width="17" height="2.500" fill="#e8e8ff"/><path d="M1897 383.500a8 8 0 0 1 16 0z" fill="#5a72e8"/><text x="1905" y="382.500" text-anchor="middle" font-family="Liberation Serif,serif" font-weight="bold" font-size="16" fill="#fff">?</text><path d="M1896 417h4l1.500-3.500h6l1.500 3.500h5v10.500h-18z" fill="#3a3a3a" stroke="#111" stroke-width="1"/><circle cx="1906" cy="422" r="4.300" fill="#222" stroke="#888" stroke-width="1"/><circle cx="1906" cy="422" r="2" fill="#3a6a5a"/><rect x="1896.500" y="457.500" width="17" height="16" fill="#d8d8d8" stroke="#555" stroke-width="1"/><path d="M1896.500 461.500h17M1896.500 465.500h17M1896.500 469.500h17M1900.500 457.500v16M1904.500 457.500v16M1908.500 457.500v16" stroke="#666" stroke-width="0.700"/><path d="M1904.500 458v7.500h9" stroke="#e01010" stroke-width="1.300" fill="none"/><path d="M1904.500 457.500v8" stroke="#20a020" stroke-width="1.300"/><rect x="1896.500" y="457.500" width="3" height="2" fill="#1a2a9a"/><path d="M1896 509.500l9-4 9 4-9 4z" fill="#111"/><path d="M1900 512.500v3.500q5 2.500 10 0v-3.500l-5 2.200z" fill="#111"/><path d="M1897.500 510.500v5.500" stroke="#111" stroke-width="1"/></svg>
<div class="a" style="left:1394.500px;top:208.500px;width:187px;height:209px;background:#dadbe0;border-radius:6px;box-shadow:0 0 1px #c0c2c8"></div>
<div class="a" style="left:1400px;top:210.500px;width:102px;height:25px;background:#ebecf0;border-radius:5px 5px 0 0"></div>
<div class="a" style="left:1400px;top:234.500px;width:176px;height:177.500px;background:#ebecf0;"></div>
<svg style="left:1393px;top:206px" width="190" height="94" viewBox="0 0 1919 949.400"><defs><radialGradient id="bg_g" cx="0.4" cy="0.3" r="0.8"><stop offset="0" stop-color="#d6d6d6"/><stop offset="0.6" stop-color="#9a9a9a"/><stop offset="1" stop-color="#7c7c7c"/></radialGradient><radialGradient id="bg_y" cx="0.4" cy="0.3" r="0.8"><stop offset="0" stop-color="#fffce0"/><stop offset="0.55" stop-color="#ffe98a"/><stop offset="1" stop-color="#f0c030"/></radialGradient><radialGradient id="bg_d" cx="0.4" cy="0.3" r="0.8"><stop offset="0" stop-color="#aaa"/><stop offset="1" stop-color="#555"/></radialGradient><linearGradient id="lkg" x1="0" y1="0" x2="1" y2="1"><stop offset="0" stop-color="#e8e8e8"/><stop offset="1" stop-color="#7a7a7a"/></linearGradient><linearGradient id="lky" x1="0" y1="0" x2="1" y2="1"><stop offset="0" stop-color="#fff080"/><stop offset="1" stop-color="#f0c000"/></linearGradient><linearGradient id="cyl" x1="0" y1="0" x2="0" y2="1"><stop offset="0" stop-color="#5a72e0"/><stop offset="0.500" stop-color="#1a2a8a"/><stop offset="1" stop-color="#0a1450"/></linearGradient><linearGradient id="cyg" x1="0" y1="0" x2="0" y2="1"><stop offset="0" stop-color="#f4f4ff"/><stop offset="0.600" stop-color="#c0c4e8"/><stop offset="1" stop-color="#8890b8"/></linearGradient></defs><g transform="translate(240,430) scale(1)"><path d="M-88 0A88 88 0 1 1 88 0C88 55 36 72 33 118L33 142Q0 162 -33 142L-33 118C-36 72 -88 55 -88 0Z" fill="url(#bg_g)" stroke="#4a4a4a" stroke-width="9"/><path d="M-31 118h62v24q-31 18-62 0z" fill="#e8e8e8" stroke="#4a4a4a" stroke-width="6"/><path d="M-30 128h60" stroke="#999" stroke-width="6"/><ellipse cx="-25" cy="-35" rx="38" ry="30" fill="#fff" opacity="0.45"/></g><g transform="translate(597,430) scale(1)"><path d="M-88 0A88 88 0 1 1 88 0C88 55 36 72 33 118L33 142Q0 162 -33 142L-33 118C-36 72 -88 55 -88 0Z" fill="url(#bg_y)" stroke="#b88a18" stroke-width="9"/><path d="M-31 118h62v24q-31 18-62 0z" fill="#e8e8e8" stroke="#b88a18" stroke-width="6"/><path d="M-30 128h60" stroke="#999" stroke-width="6"/><ellipse cx="-25" cy="-35" rx="38" ry="30" fill="#fff" opacity="0.45"/></g><g transform="translate(950,430) scale(1)"><path d="M-88 0A88 88 0 1 1 88 0C88 55 36 72 33 118L33 142Q0 162 -33 142L-33 118C-36 72 -88 55 -88 0Z" fill="url(#bg_y)" stroke="#b88a18" stroke-width="9"/><path d="M-31 118h62v24q-31 18-62 0z" fill="#e8e8e8" stroke="#b88a18" stroke-width="6"/><path d="M-30 128h60" stroke="#999" stroke-width="6"/><ellipse cx="-25" cy="-35" rx="38" ry="30" fill="#fff" opacity="0.45"/></g><path d="M1045 330 L1085 330 L1085 370" fill="none" stroke="#333" stroke-width="9" /><path d="M852 598 L812 598 L812 558" fill="none" stroke="#333" stroke-width="9" /><g transform="translate(1305,430) scale(1)"><path d="M-88 0A88 88 0 1 1 88 0C88 55 36 72 33 118L33 142Q0 162 -33 142L-33 118C-36 72 -88 55 -88 0Z" fill="url(#bg_g)" stroke="#4a4a4a" stroke-width="9"/><path d="M-31 118h62v24q-31 18-62 0z" fill="#e8e8e8" stroke="#4a4a4a" stroke-width="6"/><path d="M-30 128h60" stroke="#999" stroke-width="6"/><ellipse cx="-25" cy="-35" rx="38" ry="30" fill="#fff" opacity="0.45"/></g><path d="M1165 330H1270V432H1165Z" fill="#111"/><path d="M1172 337H1262L1172 425Z" fill="#ffe000"/><path d="M1400 330 L1440 330 L1440 370" fill="none" stroke="#333" stroke-width="9" /><path d="M1205 598 L1165 598 L1165 558" fill="none" stroke="#333" stroke-width="9" /><g transform="translate(1590,385) scale(0.625)"><path d="M-88 0A88 88 0 1 1 88 0C88 55 36 72 33 118L33 142Q0 162 -33 142L-33 118C-36 72 -88 55 -88 0Z" fill="url(#bg_g)" stroke="#4a4a4a" stroke-width="9"/><path d="M-31 118h62v24q-31 18-62 0z" fill="#e8e8e8" stroke="#4a4a4a" stroke-width="6"/><path d="M-30 128h60" stroke="#999" stroke-width="6"/><ellipse cx="-25" cy="-35" rx="38" ry="30" fill="#fff" opacity="0.45"/></g><g transform="translate(1725,385) scale(0.625)"><path d="M-88 0A88 88 0 1 1 88 0C88 55 36 72 33 118L33 142Q0 162 -33 142L-33 118C-36 72 -88 55 -88 0Z" fill="url(#bg_y)" stroke="#b88a18" stroke-width="9"/><path d="M-31 118h62v24q-31 18-62 0z" fill="#e8e8e8" stroke="#b88a18" stroke-width="6"/><path d="M-30 128h60" stroke="#999" stroke-width="6"/><ellipse cx="-25" cy="-35" rx="38" ry="30" fill="#fff" opacity="0.45"/></g><path d="M1590 540Q1600 600 1655 600Q1712 600 1722 540" fill="none" stroke="#141414" stroke-width="10" /><path d="M1590 505l-28 45h56z M1722 505l-28 45h56z" fill="#141414"/><path d="M348 725V943H150" fill="none" stroke="#8a8a8a" stroke-width="10"/><path d="M135 685H308L340 717V935H135Z" fill="#fff" stroke="#141414" stroke-width="10"/><path d="M308 685V717H340" fill="none" stroke="#141414" stroke-width="6"/><rect x="225" y="795" width="82" height="115" fill="#fff" stroke="#ccc" stroke-width="7"/><g transform="translate(205,755) scale(0.625)"><path d="M-88 0A88 88 0 1 1 88 0C88 55 36 72 33 118L33 142Q0 162 -33 142L-33 118C-36 72 -88 55 -88 0Z" fill="url(#bg_d)" stroke="#333" stroke-width="9"/><path d="M-31 118h62v24q-31 18-62 0z" fill="#e8e8e8" stroke="#333" stroke-width="6"/><path d="M-30 128h60" stroke="#999" stroke-width="6"/><ellipse cx="-25" cy="-35" rx="38" ry="30" fill="#fff" opacity="0.45"/></g><path d="M723 725V943H530" fill="none" stroke="#8a8a8a" stroke-width="10"/><path d="M515 685H683L715 717V935H515Z" fill="#fff" stroke="#333" stroke-width="9"/><path d="M683 685V717H715" fill="none" stroke="#333" stroke-width="6"/><rect x="540" y="712" width="150" height="198" fill="none" stroke="#ddd" stroke-width="6"/><path d="M565 808L620 780L665 800V860L612 885L565 862Z" fill="#ffd21a" stroke="#b88a00" stroke-width="5"/><path d="M565 808L612 828L665 800M612 828V885" fill="none" stroke="#b88a00" stroke-width="5"/><path d="M565 808L620 780L665 800L612 828Z" fill="#fff0a0"/><g transform="translate(512,740) scale(0.590909)"><path d="M-88 0A88 88 0 1 1 88 0C88 55 36 72 33 118L33 142Q0 162 -33 142L-33 118C-36 72 -88 55 -88 0Z" fill="url(#bg_y)" stroke="#b88a18" stroke-width="9"/><path d="M-31 118h62v24q-31 18-62 0z" fill="#e8e8e8" stroke="#b88a18" stroke-width="6"/><path d="M-30 128h60" stroke="#999" stroke-width="6"/><ellipse cx="-25" cy="-35" rx="38" ry="30" fill="#fff" opacity="0.45"/></g><path d="M1078 725V943H885" fill="none" stroke="#8a8a8a" stroke-width="10"/><path d="M868 685H1038L1070 717V935H868Z" fill="#fff" stroke="#333" stroke-width="9"/><path d="M1038 685V717H1070" fill="none" stroke="#333" stroke-width="6"/><rect x="893" y="712" width="150" height="198" fill="none" stroke="#ddd" stroke-width="6"/><g transform="translate(915,785) scale(1.05)" opacity="1"><polygon points="4.0,2.0 47.0,60.0 47.0,74.4 3.2,20.2" fill="#ff5a14"/><polygon points="3.2,20.2 47.0,74.4 47.0,85.8 2.6,34.6" fill="#ffffff"/><polygon points="2.6,34.6 47.0,85.8 47.0,98.0 2.0,50.0" fill="#3c5ad8"/><polygon points="47.0,60.0 98.0,40.0 97.6,52.2 47.0,74.4" fill="#e01c10" opacity="1"/><polygon points="47.0,74.4 97.6,52.2 97.3,61.8 47.0,85.8" fill="#f0f0f0" opacity="1"/><polygon points="47.0,85.8 97.3,61.8 97.0,72.0 47.0,98.0" fill="#1a2c90" opacity="1"/><polygon points="4.0,2.0 100.0,24.0 98.0,40.0 47.0,60.0" fill="#ff8a58"/><polygon points="4.0,2.0 100.0,24.0 98.0,40.0 97.0,72.0 47.0,98.0 2.0,50.0" fill="none" stroke="#1a1a1a" stroke-width="6" stroke-linejoin="round" opacity="1"/><path d="M2 50L4 2M4 2L100 24" stroke="#1a1a1a" stroke-width="7" fill="none"/></g><g transform="translate(865,740) scale(0.590909)"><path d="M-88 0A88 88 0 1 1 88 0C88 55 36 72 33 118L33 142Q0 162 -33 142L-33 118C-36 72 -88 55 -88 0Z" fill="url(#bg_y)" stroke="#b88a18" stroke-width="9"/><path d="M-31 118h62v24q-31 18-62 0z" fill="#e8e8e8" stroke="#b88a18" stroke-width="6"/><path d="M-30 128h60" stroke="#999" stroke-width="6"/><ellipse cx="-25" cy="-35" rx="38" ry="30" fill="#fff" opacity="0.45"/></g><g transform="translate(1232,795) scale(1)"><path d="M30 0V-40A40 40 0 0 1 110 -40V0" fill="none" stroke="#141414" stroke-width="22"/><rect x="0" y="0" width="140" height="115" rx="8" fill="url(#lkg)" stroke="#333" stroke-width="8"/><path d="M28 30H112" stroke="#fff" stroke-opacity="0.700" stroke-width="12"/><path d="M28 58H112" stroke="#fff" stroke-opacity="0.700" stroke-width="12"/><path d="M28 86H112" stroke="#fff" stroke-opacity="0.700" stroke-width="12"/></g><g transform="translate(1585,795) scale(1)"><path d="M108 0V-40A38 38 0 0 0 38 -52" fill="none" stroke="#141414" stroke-width="22" stroke-linecap="round"/><rect x="0" y="0" width="140" height="115" rx="8" fill="url(#lkg)" stroke="#333" stroke-width="8"/><path d="M28 30H112" stroke="#fff" stroke-opacity="0.700" stroke-width="12"/><path d="M28 58H112" stroke="#fff" stroke-opacity="0.700" stroke-width="12"/><path d="M28 86H112" stroke="#fff" stroke-opacity="0.700" stroke-width="12"/></g><g transform="translate(290,135) scale(0.681818)"><path d="M-88 0A88 88 0 1 1 88 0C88 55 36 72 33 118L33 142Q0 162 -33 142L-33 118C-36 72 -88 55 -88 0Z" fill="url(#bg_g)" stroke="#4a4a4a" stroke-width="9"/><path d="M-31 118h62v24q-31 18-62 0z" fill="#e8e8e8" stroke="#4a4a4a" stroke-width="6"/><path d="M-30 128h60" stroke="#999" stroke-width="6"/><ellipse cx="-25" cy="-35" rx="38" ry="30" fill="#fff" opacity="0.45"/></g></svg>
<svg style="left:1393px;top:300px" width="190" height="120" viewBox="0 0 1615 1020"><g transform="translate(148,165) scale(1)"><path d="M83 0V-40A38 38 0 0 0 13 -52" fill="none" stroke="#141414" stroke-width="18" stroke-linecap="round"/><rect x="0" y="0" width="115" height="98" rx="8" fill="url(#lky)" stroke="#333" stroke-width="8"/><path d="M28 30H87" stroke="#fff" stroke-opacity="0.700" stroke-width="12"/><path d="M28 58H87" stroke="#fff" stroke-opacity="0.700" stroke-width="12"/><path d="M28 86H87" stroke="#fff" stroke-opacity="0.700" stroke-width="12"/></g><path d="M288 72 L320 72 L320 104" fill="none" stroke="#333" stroke-width="9" /><path d="M122 297 L90 297 L90 265" fill="none" stroke="#333" stroke-width="9" /><g transform="translate(478,165) scale(1)"><path d="M30 0V-40A40 40 0 0 1 85 -40V0" fill="none" stroke="#141414" stroke-width="22"/><rect x="0" y="0" width="115" height="98" rx="8" fill="url(#lkg)" stroke="#333" stroke-width="8"/><path d="M28 30H87" stroke="#fff" stroke-opacity="0.700" stroke-width="12"/><path d="M28 58H87" stroke="#fff" stroke-opacity="0.700" stroke-width="12"/><path d="M28 86H87" stroke="#fff" stroke-opacity="0.700" stroke-width="12"/></g><path d="M385 70H478V160H385Z" fill="#111"/><path d="M391 76H470L391 152Z" fill="#ffe000"/><path d="M585 72 L617 72 L617 104" fill="none" stroke="#333" stroke-width="9" /><path d="M420 297 L388 297 L388 265" fill="none" stroke="#333" stroke-width="9" /><g transform="translate(682,140) scale(1)"><path d="M30 0V-40A40 40 0 0 1 65 -40V0" fill="none" stroke="#141414" stroke-width="15"/><rect x="0" y="0" width="95" height="80" rx="8" fill="url(#lkg)" stroke="#333" stroke-width="8"/><path d="M28 30H67" stroke="#fff" stroke-opacity="0.700" stroke-width="12"/><path d="M28 58H67" stroke="#fff" stroke-opacity="0.700" stroke-width="12"/><path d="M28 86H67" stroke="#fff" stroke-opacity="0.700" stroke-width="12"/></g><g transform="translate(815,140) scale(1)"><path d="M63 0V-40A38 38 0 0 0 -7 -52" fill="none" stroke="#141414" stroke-width="15" stroke-linecap="round"/><rect x="0" y="0" width="95" height="80" rx="8" fill="url(#lkg)" stroke="#333" stroke-width="8"/><path d="M28 30H67" stroke="#fff" stroke-opacity="0.700" stroke-width="12"/><path d="M28 58H67" stroke="#fff" stroke-opacity="0.700" stroke-width="12"/><path d="M28 86H67" stroke="#fff" stroke-opacity="0.700" stroke-width="12"/></g><path d="M738 245Q748 295 797 295Q848 295 858 245" fill="none" stroke="#141414" stroke-width="9" /><path d="M735 222l-24 38h48z M860 222l-24 38h48z" fill="#141414"/><path d="M998 92 L1192 92" fill="none" stroke="#b8b8b8" stroke-width="5" stroke-dasharray="10 8"/><path d="M998 177 L1192 177" fill="none" stroke="#b8b8b8" stroke-width="5" stroke-dasharray="10 8"/><path d="M998 262 L1192 262" fill="none" stroke="#b8b8b8" stroke-width="5" stroke-dasharray="10 8"/><path d="M998 92 L998 262" fill="none" stroke="#b8b8b8" stroke-width="5" stroke-dasharray="10 8"/><path d="M1095 92 L1095 262" fill="none" stroke="#b8b8b8" stroke-width="5" stroke-dasharray="10 8"/><path d="M1192 92 L1192 262" fill="none" stroke="#b8b8b8" stroke-width="5" stroke-dasharray="10 8"/><rect x="1050" y="140" width="90" height="160" fill="none" stroke="#222" stroke-width="9"/><rect x="983" y="77" width="30" height="30" fill="#fff" stroke="#b8b8b8" stroke-width="8"/><rect x="1080" y="77" width="30" height="30" fill="#fff" stroke="#b8b8b8" stroke-width="8"/><rect x="1177" y="77" width="30" height="30" fill="#fff" stroke="#b8b8b8" stroke-width="8"/><rect x="983" y="162" width="30" height="30" fill="#fff" stroke="#b8b8b8" stroke-width="8"/><rect x="1080" y="162" width="30" height="30" fill="#fff" stroke="#222" stroke-width="8"/><rect x="1177" y="162" width="30" height="30" fill="#fff" stroke="#b8b8b8" stroke-width="8"/><rect x="983" y="247" width="30" height="30" fill="#fff" stroke="#b8b8b8" stroke-width="8"/><rect x="1080" y="247" width="30" height="30" fill="#fff" stroke="#222" stroke-width="8"/><rect x="1177" y="247" width="30" height="30" fill="#fff" stroke="#b8b8b8" stroke-width="8"/><path d="M1298 92 L1492 92" fill="none" stroke="#222" stroke-width="5" stroke-dasharray="10 8"/><path d="M1298 177 L1492 177" fill="none" stroke="#222" stroke-width="5" stroke-dasharray="10 8"/><path d="M1298 262 L1492 262" fill="none" stroke="#222" stroke-width="5" stroke-dasharray="10 8"/><path d="M1298 92 L1298 262" fill="none" stroke="#222" stroke-width="5" stroke-dasharray="10 8"/><path d="M1395 92 L1395 262" fill="none" stroke="#222" stroke-width="5" stroke-dasharray="10 8"/><path d="M1492 92 L1492 262" fill="none" stroke="#222" stroke-width="5" stroke-dasharray="10 8"/><rect x="1350" y="140" width="90" height="160" fill="none" stroke="#222" stroke-width="9"/><rect x="1283" y="77" width="30" height="30" fill="#fff" stroke="#222" stroke-width="8"/><rect x="1380" y="77" width="30" height="30" fill="#fff" stroke="#222" stroke-width="8"/><rect x="1477" y="77" width="30" height="30" fill="#fff" stroke="#222" stroke-width="8"/><rect x="1283" y="162" width="30" height="30" fill="#fff" stroke="#222" stroke-width="8"/><rect x="1380" y="162" width="30" height="30" fill="#fff" stroke="#222" stroke-width="8"/><rect x="1477" y="162" width="30" height="30" fill="#fff" stroke="#222" stroke-width="8"/><rect x="1283" y="247" width="30" height="30" fill="#fff" stroke="#222" stroke-width="8"/><rect x="1380" y="247" width="30" height="30" fill="#fff" stroke="#222" stroke-width="8"/><rect x="1477" y="247" width="30" height="30" fill="#fff" stroke="#222" stroke-width="8"/><rect x="1372" y="148" width="46" height="146" fill="#eee" stroke="#bbb" stroke-width="5"/><rect x="1350" y="140" width="90" height="160" fill="none" stroke="#222" stroke-width="9"/><g transform="translate(160,485)"><path d="M-30 -110 L115 110" fill="none" stroke="#333" stroke-width="6" /><path d="M-30 110 L115 -110" fill="none" stroke="#333" stroke-width="6" /><path d="M-30 -110 L110 -110" fill="none" stroke="#333" stroke-width="6" /><path d="M-20 110 L115 110" fill="none" stroke="#333" stroke-width="6" /><rect x="-70" y="-62" width="225" height="124" rx="40" fill="url(#cyg)" stroke="#333" stroke-width="6"/><rect x="-30" y="-62" width="95" height="124" fill="url(#cyl)"/><ellipse cx="-55" cy="0" rx="28" ry="60" fill="#dfe2fa" stroke="#333" stroke-width="6"/><rect x="88" y="-120" width="28" height="28" fill="#fff" stroke="#222" stroke-width="7"/><rect x="-30" y="86" width="28" height="28" fill="#fff" stroke="#222" stroke-width="7"/></g><g transform="translate(458,485)"><path d="M-30 -110 L115 110" fill="none" stroke="#333" stroke-width="6" /><path d="M-30 110 L115 -110" fill="none" stroke="#333" stroke-width="6" /><path d="M-30 -110 L110 -110" fill="none" stroke="#333" stroke-width="6" /><path d="M-20 110 L115 110" fill="none" stroke="#333" stroke-width="6" /><rect x="-70" y="-62" width="225" height="124" rx="40" fill="url(#cyg)" stroke="#333" stroke-width="6"/><rect x="-30" y="-62" width="95" height="124" fill="url(#cyl)"/><ellipse cx="-55" cy="0" rx="28" ry="60" fill="#dfe2fa" stroke="#333" stroke-width="6"/><rect x="88" y="-120" width="28" height="28" fill="#fff" stroke="#222" stroke-width="7"/><rect x="-30" y="86" width="28" height="28" fill="#fff" stroke="#222" stroke-width="7"/></g><path d="M425 410 L575 560" fill="none" stroke="#cc0808" stroke-width="22" /><path d="M575 410 L425 560" fill="none" stroke="#cc0808" stroke-width="22" /><rect x="708" y="395" width="180" height="178" fill="#f0f0f0" stroke="#222" stroke-width="9"/><path d="M765 425H835L845 545H758Z" fill="#ccc" stroke="#333" stroke-width="7"/><ellipse cx="795" cy="487" rx="55" ry="38" fill="#ffec60" stroke="#998" stroke-width="5"/><rect x="770" y="465" width="52" height="45" fill="#ffe000"/><path d="M880 372 L912 372 L912 404" fill="none" stroke="#333" stroke-width="9" /><path d="M717 597 L685 597 L685 565" fill="none" stroke="#333" stroke-width="9" /><g transform="translate(1148,443) scale(0.681818)"><path d="M-88 0A88 88 0 1 1 88 0C88 55 36 72 33 118L33 142Q0 162 -33 142L-33 118C-36 72 -88 55 -88 0Z" fill="url(#bg_y)" stroke="#b88a18" stroke-width="9"/><path d="M-31 118h62v24q-31 18-62 0z" fill="#e8e8e8" stroke="#b88a18" stroke-width="6"/><path d="M-30 128h60" stroke="#999" stroke-width="6"/><ellipse cx="-25" cy="-35" rx="38" ry="30" fill="#fff" opacity="0.45"/></g><g transform="translate(1050,443) scale(0.772727)"><path d="M-88 0A88 88 0 1 1 88 0C88 55 36 72 33 118L33 142Q0 162 -33 142L-33 118C-36 72 -88 55 -88 0Z" fill="url(#bg_g)" stroke="#4a4a4a" stroke-width="9"/><path d="M-31 118h62v24q-31 18-62 0z" fill="#e8e8e8" stroke="#4a4a4a" stroke-width="6"/><path d="M-30 128h60" stroke="#999" stroke-width="6"/><ellipse cx="-25" cy="-35" rx="38" ry="30" fill="#fff" opacity="0.45"/></g><rect x="1128" y="493" width="82" height="103" fill="#fff" stroke="#222" stroke-width="8"/><text x="1138" y="583" font-family="Liberation Sans,sans-serif" font-size="96" fill="#141414" textLength="62" lengthAdjust="spacingAndGlyphs" >A</text><g transform="translate(1446,443) scale(0.681818)"><path d="M-88 0A88 88 0 1 1 88 0C88 55 36 72 33 118L33 142Q0 162 -33 142L-33 118C-36 72 -88 55 -88 0Z" fill="url(#bg_y)" stroke="#b88a18" stroke-width="9"/><path d="M-31 118h62v24q-31 18-62 0z" fill="#e8e8e8" stroke="#b88a18" stroke-width="6"/><path d="M-30 128h60" stroke="#999" stroke-width="6"/><ellipse cx="-25" cy="-35" rx="38" ry="30" fill="#fff" opacity="0.45"/></g><g transform="translate(1348,443) scale(0.772727)"><path d="M-88 0A88 88 0 1 1 88 0C88 55 36 72 33 118L33 142Q0 162 -33 142L-33 118C-36 72 -88 55 -88 0Z" fill="url(#bg_g)" stroke="#4a4a4a" stroke-width="9"/><path d="M-31 118h62v24q-31 18-62 0z" fill="#e8e8e8" stroke="#4a4a4a" stroke-width="6"/><path d="M-30 128h60" stroke="#999" stroke-width="6"/><ellipse cx="-25" cy="-35" rx="38" ry="30" fill="#fff" opacity="0.45"/></g><rect x="1426" y="493" width="82" height="103" fill="#fff" stroke="#222" stroke-width="8"/><text x="1436" y="583" font-family="Liberation Sans,sans-serif" font-size="96" fill="#141414" textLength="62" lengthAdjust="spacingAndGlyphs" >B</text><g transform="translate(256,743) scale(0.681818)"><path d="M-88 0A88 88 0 1 1 88 0C88 55 36 72 33 118L33 142Q0 162 -33 142L-33 118C-36 72 -88 55 -88 0Z" fill="url(#bg_y)" stroke="#b88a18" stroke-width="9"/><path d="M-31 118h62v24q-31 18-62 0z" fill="#e8e8e8" stroke="#b88a18" stroke-width="6"/><path d="M-30 128h60" stroke="#999" stroke-width="6"/><ellipse cx="-25" cy="-35" rx="38" ry="30" fill="#fff" opacity="0.45"/></g><g transform="translate(158,743) scale(0.772727)"><path d="M-88 0A88 88 0 1 1 88 0C88 55 36 72 33 118L33 142Q0 162 -33 142L-33 118C-36 72 -88 55 -88 0Z" fill="url(#bg_g)" stroke="#4a4a4a" stroke-width="9"/><path d="M-31 118h62v24q-31 18-62 0z" fill="#e8e8e8" stroke="#4a4a4a" stroke-width="6"/><path d="M-30 128h60" stroke="#999" stroke-width="6"/><ellipse cx="-25" cy="-35" rx="38" ry="30" fill="#fff" opacity="0.45"/></g><rect x="236" y="793" width="82" height="103" fill="#fff" stroke="#222" stroke-width="8"/><text x="246" y="883" font-family="Liberation Sans,sans-serif" font-size="96" fill="#141414" textLength="62" lengthAdjust="spacingAndGlyphs" >C</text></svg>
<span class="t" style="left:1438.00px;top:213.80px;font-size:15.00px;letter-spacing:0.121px;color:#33353d;">Visibility</span>
<svg style="left:1536.5px;top:213.8px" width="17" height="17" viewBox="1536.5 213.8 17 17"><polygon points="1552.46,223.04 1552.18,224.48 1549.76,224.85 1549.17,225.73 1549.76,228.10 1548.54,228.91 1546.57,227.47 1545.53,227.67 1544.26,229.76 1542.82,229.48 1542.45,227.06 1541.57,226.47 1539.20,227.06 1538.39,225.84 1539.83,223.87 1539.63,222.83 1537.54,221.56 1537.82,220.12 1540.24,219.75 1540.83,218.87 1540.24,216.50 1541.46,215.69 1543.43,217.13 1544.47,216.93 1545.74,214.84 1547.18,215.12 1547.55,217.54 1548.43,218.13 1550.80,217.54 1551.61,218.76 1550.17,220.73 1550.37,221.77" fill="#cdced3"/><circle cx="1545" cy="222.3" r="2.7" fill="#dadbe0"/></svg>
<svg style="left:1561px;top:216px" width="13" height="13"><path d="M1.500 1.500l9.500 9.500m0-9.500l-9.500 9.500" stroke="#bfc0c6" stroke-width="1.800" fill="none"/></svg>
</body></html>
